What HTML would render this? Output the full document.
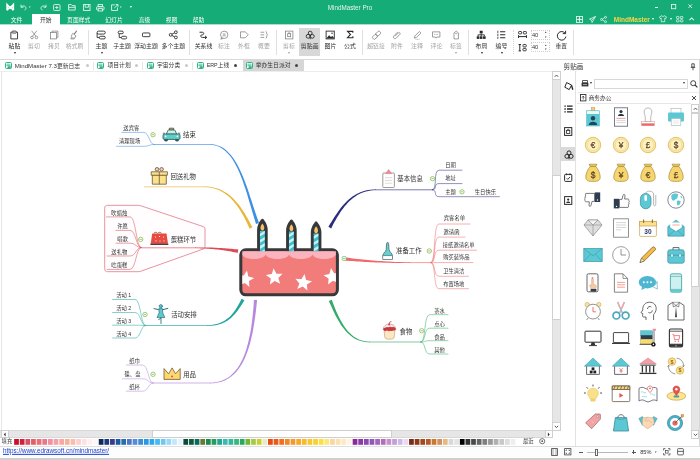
<!DOCTYPE html>
<html lang="zh-CN"><head><meta charset="utf-8"><title>MindMaster Pro</title>
<style>
html,body{margin:0;padding:0;}
body{width:700px;height:460px;overflow:hidden;position:relative;background:#fff;font-family:"Liberation Sans","Noto Sans CJK SC",sans-serif;}
div,svg{position:absolute;box-sizing:border-box;}
svg{overflow:visible;}
.t{white-space:nowrap;line-height:1;}
</style></head><body><div id="app" style="left:0;top:0;width:700px;height:460px;will-change:transform;">
<div style="left:0px;top:0px;width:700px;height:24px;background:#16ac77;"></div>
<div style="left:0px;top:24px;width:700px;height:1px;background:#a9e0cd;"></div>
<div class="t" style="left:350px;top:7.5px;font-size:6.3px;color:rgba(255,255,255,0.88);transform:translate(-50%,-50%);">MindMaster Pro</div>
<svg style="left:6px;top:3.6px;" width="8.4" height="7" viewBox="0 0 8.4 7.4"><path d="M1 6.6V0.8L4.2 4.3L7.4 0.8V6.6" stroke="#fff" fill="none" stroke-width="1.9" stroke-linejoin="miter"/><path d="M1 6.6L4.2 2.9L7.4 6.6" stroke="#fff" fill="none" stroke-width="1.3"/></svg>
<div style="left:0;top:0;opacity:0.85">
<svg style="left:20px;top:3.8px;" width="7" height="6.4" viewBox="0 0 7 6"><path d="M1 0.5V3H3.5" stroke="#fff" fill="none" stroke-width="0.9"/><path d="M1 3C2.5 1 6 1.5 6 4C6 5 5.5 5.5 4.5 5.8" stroke="#fff" fill="none" stroke-width="0.9"/></svg>
<div class="t" style="left:30px;top:7.8px;font-size:3.4px;color:#fff;transform:translate(-50%,-50%);">▾</div>
<svg style="left:39.5px;top:3.8px;" width="7" height="6.4" viewBox="0 0 7 6"><path d="M6 0.5V3H3.5" stroke="#fff" fill="none" stroke-width="0.9"/><path d="M6 3C4.5 1 1 1.5 1 4C1 5 1.5 5.5 2.5 5.8" stroke="#fff" fill="none" stroke-width="0.9"/></svg>
<svg style="left:52.8px;top:3.5px;" width="7.6" height="7" viewBox="0 0 7 6.5"><rect x="0.5" y="0.5" width="6" height="5.5" rx="0.8" stroke="#fff" fill="none" stroke-width="0.85"/><path d="M3.5 1.8V4.7M2 3.25H5" stroke="#fff" fill="none" stroke-width="0.85"/></svg>
<svg style="left:67.6px;top:3.8px;" width="7.8" height="6.6" viewBox="0 0 7 6"><path d="M0.5 5.5V0.5H3L3.8 1.5H6.5V5.5Z" stroke="#fff" fill="none" stroke-width="0.85"/><path d="M0.5 3H6.5" stroke="#fff" fill="none" stroke-width="0.85"/></svg>
<svg style="left:82.6px;top:3.5px;" width="7.6" height="7" viewBox="0 0 7 6.5"><rect x="0.5" y="0.5" width="6" height="5.5" stroke="#fff" fill="none" stroke-width="0.85"/><path d="M2 0.5V3H5V0.5" stroke="#fff" fill="none" stroke-width="0.85"/></svg>
<svg style="left:96px;top:3.5px;" width="8.6" height="7.5" viewBox="0 0 8 7"><rect x="2" y="0.5" width="4" height="2" stroke="#fff" fill="none" stroke-width="0.85"/><rect x="0.5" y="2.5" width="7" height="3" rx="0.8" stroke="#fff" fill="none" stroke-width="0.85"/><rect x="2" y="4.3" width="4" height="2.2" stroke="#fff" stroke-width="0.85" fill="#16ac77"/></svg>
<svg style="left:110.8px;top:3.5px;" width="7.6" height="7" viewBox="0 0 7 6.5"><path d="M3.5 0.8H0.5V6H6V3.2" stroke="#fff" fill="none" stroke-width="0.85"/><path d="M3 3.7L6.5 0.5M4.3 0.5H6.5V2.6" stroke="#fff" fill="none" stroke-width="0.85"/></svg>
<div class="t" style="left:121.3px;top:7.8px;font-size:3.4px;color:#fff;transform:translate(-50%,-50%);">▾</div>
<div class="t" style="left:131px;top:8.3px;font-size:3.4px;color:#fff;transform:translate(-50%,-50%);">▾</div>
<div style="left:129.7px;top:5.5px;width:2.6px;height:0.7px;background:#fff;"></div>
</div>
<div style="left:654.6px;top:6.7px;width:3.6px;height:0.9px;background:rgba(255,255,255,0.9);"></div>
<svg style="left:671.2px;top:4px;" width="5.2" height="5.2" viewBox="0 0 5.2 5.2"><rect x="0.45" y="0.45" width="4.3" height="4.3" stroke="#fff" fill="none" stroke-width="0.85" opacity="0.9"/></svg>
<svg style="left:688.2px;top:4.3px;" width="4.4" height="4.4" viewBox="0 0 4.4 4.4"><path d="M0.4 0.4L4 4M4 0.4L0.4 4" stroke="#fff" fill="none" stroke-width="0.85" opacity="0.9"/></svg>
<div style="left:32px;top:14px;width:28px;height:11px;background:#fff;"></div>
<div class="t" style="left:16.5px;top:20.7px;font-size:5.8px;color:#fff;transform:translate(-50%,-50%);">文件</div>
<div class="t" style="left:45.7px;top:20.7px;font-size:5.8px;color:#333;transform:translate(-50%,-50%);">开始</div>
<div class="t" style="left:78.7px;top:20.7px;font-size:5.8px;color:#fff;transform:translate(-50%,-50%);">页面样式</div>
<div class="t" style="left:114px;top:20.7px;font-size:5.8px;color:#fff;transform:translate(-50%,-50%);">幻灯片</div>
<div class="t" style="left:144.5px;top:20.7px;font-size:5.8px;color:#fff;transform:translate(-50%,-50%);">高级</div>
<div class="t" style="left:171.5px;top:20.7px;font-size:5.8px;color:#fff;transform:translate(-50%,-50%);">视图</div>
<div class="t" style="left:198.5px;top:20.7px;font-size:5.8px;color:#fff;transform:translate(-50%,-50%);">帮助</div>
<div style="left:0;top:0;opacity:0.88">
<svg style="left:575.8px;top:15.6px;" width="7" height="7" viewBox="0 0 8 8"><rect x="0.5" y="0.5" width="7" height="7" stroke="#fff" fill="none" stroke-width="1"/><path d="M4 0.5V7.5M0.5 4H7.5" stroke="#fff" fill="none" stroke-width="1"/><circle cx="4" cy="4" r="1.3" fill="#fff"/></svg>
<svg style="left:588.5px;top:15.6px;" width="7" height="7" viewBox="0 0 8 8"><path d="M7.5 0.5L0.5 3.5L3 4.8L3.5 7.5L7.5 0.5ZM3 4.8L7.5 0.5" stroke="#fff" fill="none" stroke-width="0.9" stroke-linejoin="round"/></svg>
<svg style="left:600px;top:15.6px;" width="7" height="7" viewBox="0 0 8 8"><circle cx="6.3" cy="1.5" r="1.1" stroke="#fff" fill="none" stroke-width="0.9"/><circle cx="1.7" cy="4" r="1.1" stroke="#fff" fill="none" stroke-width="0.9"/><circle cx="6.3" cy="6.5" r="1.1" stroke="#fff" fill="none" stroke-width="0.9"/><path d="M2.7 3.5L5.3 2M2.7 4.5L5.3 6" stroke="#fff" fill="none" stroke-width="0.9"/></svg>
<svg style="left:659px;top:15.4px;" width="8" height="7.2" viewBox="0 0 9 8"><path d="M3 0.8L0.5 2.2L1.5 4L2.5 3.5V7.5H6.5V3.5L7.5 4L8.5 2.2L6 0.8C5.5 1.8 3.5 1.8 3 0.8Z" stroke="#fff" fill="none" stroke-width="0.9" stroke-linejoin="round"/></svg>
<svg style="left:676px;top:15.9px;" width="7.4" height="6.4" viewBox="0 0 8 7"><rect x="0.5" y="0.5" width="2.8" height="2.4" rx="0.8" stroke="#fff" fill="none" stroke-width="0.9"/><rect x="4.7" y="0.5" width="2.8" height="2.4" rx="0.8" stroke="#fff" fill="none" stroke-width="0.9"/><rect x="0.5" y="4.1" width="2.8" height="2.4" rx="0.8" stroke="#fff" fill="none" stroke-width="0.9"/><rect x="4.7" y="4.1" width="2.8" height="2.4" rx="0.8" stroke="#fff" fill="none" stroke-width="0.9"/></svg>
<svg style="left:689px;top:17.3px;" width="5.4" height="3.6" viewBox="0 0 6 4"><path d="M0.5 3.5L3 1L5.5 3.5" stroke="#fff" fill="none" stroke-width="1.2"/></svg>
</div>
<div class="t" style="left:631.8px;top:19.9px;font-size:6.5px;color:#f6d648;transform:translate(-50%,-50%);font-weight:bold;">MindMaster</div>
<div class="t" style="left:652.7px;top:20.2px;font-size:3.6px;color:#fff;transform:translate(-50%,-50%);">▾</div>
<div class="t" style="left:671.3px;top:20.2px;font-size:3.6px;color:#fff;transform:translate(-50%,-50%);">▾</div>
<div style="left:0px;top:25px;width:700px;height:34.5px;background:#fff;border-bottom:1px solid #d9d9d9;"></div>
<svg style="left:9.3px;top:30.400000000000002px;" width="10.4" height="9.65" viewBox="0 0 14 13"><path d="M3.5 3H2.5V12H11.5V3H10.5" stroke="#2a2a2a" fill="none" stroke-width="1.2"/><rect x="4" y="1.5" width="6" height="2.6" rx="1" stroke="#2a2a2a" fill="none" stroke-width="1.2"/></svg>
<div class="t" style="left:14.5px;top:46.9px;font-size:5.9px;color:#2a2a2a;transform:translate(-50%,-50%);">粘贴</div>
<div class="t" style="left:14.5px;top:53.2px;font-size:4.2px;color:#2a2a2a;transform:translate(-50%,-50%);">▾</div>
<svg style="left:28.8px;top:30.400000000000002px;" width="10.4" height="9.65" viewBox="0 0 14 13"><circle cx="4" cy="10" r="1.8" stroke="#7c7c7c" fill="none" stroke-width="1.0"/><circle cx="10" cy="10" r="1.8" stroke="#7c7c7c" fill="none" stroke-width="1.0"/><path d="M4.8 8.3L10.5 1M9.2 8.3L3.5 1" stroke="#7c7c7c" fill="none" stroke-width="1.0"/></svg>
<div class="t" style="left:34px;top:46.9px;font-size:5.9px;color:#a4a4a4;transform:translate(-50%,-50%);">剪切</div>
<svg style="left:48.8px;top:30.400000000000002px;" width="10.4" height="9.65" viewBox="0 0 14 13"><path d="M4 3V1.5H12V10H10.5" stroke="#7c7c7c" fill="none" stroke-width="1.0"/><rect x="2" y="3.5" width="8" height="8.5" stroke="#7c7c7c" fill="none" stroke-width="1.0"/></svg>
<div class="t" style="left:54px;top:46.9px;font-size:5.9px;color:#a4a4a4;transform:translate(-50%,-50%);">拷贝</div>
<svg style="left:69.3px;top:30.400000000000002px;" width="10.4" height="9.65" viewBox="0 0 14 13"><path d="M10.5 1L7 5.5" stroke="#7c7c7c" fill="none" stroke-width="1.6"/><path d="M5 4.5L9.5 8L7 12H2.5C3.5 10 3 7 5 4.5Z" stroke="#7c7c7c" fill="none" stroke-width="1.0"/><path d="M4 12L5 9.5M6 12L7 9.5" stroke="#7c7c7c" fill="none" stroke-width="0.7"/></svg>
<div class="t" style="left:74.5px;top:46.9px;font-size:5.9px;color:#a4a4a4;transform:translate(-50%,-50%);">格式刷</div>
<div style="left:88.0px;top:30px;width:1px;height:25px;background:#e0e0e0;"></div>
<svg style="left:96.3px;top:30.400000000000002px;" width="10.4" height="9.65" viewBox="0 0 14 13"><rect x="1.5" y="1.5" width="11" height="4" rx="2" stroke="#2a2a2a" fill="none" stroke-width="1.2"/><rect x="4.5" y="8.5" width="8" height="3.5" rx="1.7" stroke="#2a2a2a" fill="none" stroke-width="1.2"/><path d="M1.5 4V10.2H4.5" stroke="#2a2a2a" fill="none" stroke-width="1.2"/></svg>
<div class="t" style="left:101.5px;top:46.9px;font-size:5.9px;color:#2a2a2a;transform:translate(-50%,-50%);">主题</div>
<div class="t" style="left:101.5px;top:53.2px;font-size:4.2px;color:#2a2a2a;transform:translate(-50%,-50%);">▾</div>
<svg style="left:116.8px;top:30.400000000000002px;" width="10.4" height="9.65" viewBox="0 0 14 13"><rect x="1.5" y="1.5" width="7" height="3.5" rx="1.7" stroke="#2a2a2a" fill="none" stroke-width="1.2"/><rect x="6" y="8.5" width="7" height="3.5" rx="1.7" stroke="#2a2a2a" fill="none" stroke-width="1.2"/><path d="M3 5V10.2H6" stroke="#2a2a2a" fill="none" stroke-width="1.2"/></svg>
<div class="t" style="left:122px;top:46.9px;font-size:5.9px;color:#2a2a2a;transform:translate(-50%,-50%);">子主题</div>
<svg style="left:140.8px;top:30.400000000000002px;" width="10.4" height="9.65" viewBox="0 0 14 13"><rect x="2" y="4" width="10" height="5" rx="1" stroke="#2a2a2a" fill="none" stroke-width="1.2"/></svg>
<div class="t" style="left:146px;top:46.9px;font-size:5.9px;color:#2a2a2a;transform:translate(-50%,-50%);">浮动主题</div>
<svg style="left:168.10000000000002px;top:30.400000000000002px;" width="10.4" height="9.65" viewBox="0 0 14 13"><circle cx="3.6" cy="6.5" r="1.9" stroke="#2a2a2a" fill="none" stroke-width="1.2"/><circle cx="10.6" cy="3" r="1.9" stroke="#2a2a2a" fill="none" stroke-width="1.2"/><circle cx="10.6" cy="10" r="1.9" stroke="#2a2a2a" fill="none" stroke-width="1.2"/><path d="M5.3 5.6L8.9 3.8M5.3 7.4L8.9 9.2" stroke="#2a2a2a" fill="none" stroke-width="1.2"/></svg>
<div class="t" style="left:173.3px;top:46.9px;font-size:5.9px;color:#2a2a2a;transform:translate(-50%,-50%);">多个主题</div>
<div style="left:189.0px;top:30px;width:1px;height:25px;background:#e0e0e0;"></div>
<svg style="left:198.3px;top:30.400000000000002px;" width="10.4" height="9.65" viewBox="0 0 14 13"><path d="M2 3H5.5C8.5 3 8.5 6.5 5.5 6.5C3 6.5 3 10 6 10H11.5" stroke="#2a2a2a" fill="none" stroke-width="1.3"/><path d="M9.5 8L11.8 10L9.5 12" stroke="#2a2a2a" fill="none" stroke-width="1.3"/></svg>
<div class="t" style="left:203.5px;top:46.9px;font-size:5.9px;color:#2a2a2a;transform:translate(-50%,-50%);">关系线</div>
<svg style="left:218.8px;top:30.400000000000002px;" width="10.4" height="9.65" viewBox="0 0 14 13"><circle cx="7" cy="6.5" r="5" stroke="#7c7c7c" fill="none" stroke-width="1.0"/><path d="M3.5 10L2.5 12.5L5.5 11.2" stroke="#7c7c7c" fill="none" stroke-width="1.0"/><path d="M5 5.5H9M5 7.8H9" stroke="#7c7c7c" fill="none" stroke-width="1.0"/></svg>
<div class="t" style="left:224px;top:46.9px;font-size:5.9px;color:#a4a4a4;transform:translate(-50%,-50%);">标注</div>
<svg style="left:238.8px;top:30.400000000000002px;" width="10.4" height="9.65" viewBox="0 0 14 13"><path d="M2 2.5H8.5L12.5 6.5L8.5 10.5H2Z" stroke="#7c7c7c" fill="none" stroke-width="1.0" stroke-linejoin="round"/></svg>
<div class="t" style="left:244px;top:46.9px;font-size:5.9px;color:#a4a4a4;transform:translate(-50%,-50%);">外框</div>
<svg style="left:258.8px;top:30.400000000000002px;" width="10.4" height="9.65" viewBox="0 0 14 13"><path d="M2 3H7M2 6.5H7M2 10H7" stroke="#7c7c7c" fill="none" stroke-width="1.0"/><path d="M9 1.5C10.5 1.5 10 6 11.5 6.5C10 7 10.5 11.5 9 11.5" stroke="#7c7c7c" fill="none" stroke-width="1.0"/></svg>
<div class="t" style="left:264px;top:46.9px;font-size:5.9px;color:#a4a4a4;transform:translate(-50%,-50%);">概要</div>
<div style="left:276.0px;top:30px;width:1px;height:25px;background:#e0e0e0;"></div>
<svg style="left:283.8px;top:30.400000000000002px;" width="10.4" height="9.65" viewBox="0 0 14 13"><rect x="2" y="1.5" width="10" height="10.5" stroke="#7c7c7c" fill="none" stroke-width="1.0"/><rect x="5" y="5" width="4" height="4" stroke="#7c7c7c" fill="none" stroke-width="1.0"/><path d="M5 5L7 3.5L9 5" stroke="#7c7c7c" fill="none" stroke-width="1.0"/></svg>
<div class="t" style="left:289px;top:46.9px;font-size:5.9px;color:#a4a4a4;transform:translate(-50%,-50%);">剪标</div>
<div class="t" style="left:289px;top:53.2px;font-size:4.2px;color:#a4a4a4;transform:translate(-50%,-50%);">▾</div>
<div style="left:299px;top:27.5px;width:21px;height:28px;background:#d8d8d8;"></div>
<svg style="left:304.5px;top:30.400000000000002px;" width="10.4" height="9.65" viewBox="0 0 14 13"><circle cx="7" cy="4.2" r="2.6" stroke="#2a2a2a" fill="none" stroke-width="1.2"/><circle cx="4.2" cy="8.5" r="2.6" stroke="#2a2a2a" fill="none" stroke-width="1.2"/><circle cx="9.8" cy="8.5" r="2.6" stroke="#2a2a2a" fill="none" stroke-width="1.2"/><path d="M7 8.5V12.4" stroke="#2a2a2a" fill="none" stroke-width="1.2"/></svg>
<div class="t" style="left:309.7px;top:46.9px;font-size:5.9px;color:#2a2a2a;transform:translate(-50%,-50%);">剪贴画</div>
<svg style="left:325.3px;top:30.400000000000002px;" width="10.4" height="9.65" viewBox="0 0 14 13"><rect x="1.5" y="1.5" width="11" height="10.5" stroke="#2a2a2a" fill="none" stroke-width="1.2"/><path d="M2 11L5.5 7L8 9.5L10 8L12 10.5V11.5H2Z" fill="#2a2a2a" stroke="none"/><circle cx="9.5" cy="4.5" r="1" fill="#2a2a2a"/></svg>
<div class="t" style="left:330.5px;top:46.9px;font-size:5.9px;color:#2a2a2a;transform:translate(-50%,-50%);">图片</div>
<svg style="left:344.8px;top:30.400000000000002px;" width="10.4" height="9.65" viewBox="0 0 14 13"><path d="M10.6 3.8V1.8H3.4L7.4 6L3.4 10.4H10.6V8.4" stroke="#2a2a2a" fill="none" stroke-width="1.5"/></svg>
<div class="t" style="left:350px;top:46.9px;font-size:5.9px;color:#2a2a2a;transform:translate(-50%,-50%);">公式</div>
<div style="left:361.5px;top:30px;width:1px;height:25px;background:#e0e0e0;"></div>
<svg style="left:370.8px;top:30.400000000000002px;" width="10.4" height="9.65" viewBox="0 0 14 13"><rect x="5.5" y="0" width="4.5" height="7" rx="1.5" transform="rotate(45 7 6.5)" stroke="#7c7c7c" fill="none" stroke-width="1.0"/><rect x="5.5" y="6" width="4.5" height="7" rx="1.5" transform="rotate(45 7 6.5)" stroke="#7c7c7c" fill="none" stroke-width="1.0"/></svg>
<div class="t" style="left:376px;top:46.9px;font-size:5.9px;color:#a4a4a4;transform:translate(-50%,-50%);">超链接</div>
<svg style="left:391.8px;top:30.400000000000002px;" width="10.4" height="9.65" viewBox="0 0 14 13"><path d="M4 8.5L8.5 4C10 2.5 12 4.5 10.5 6L5.5 11C3.5 13 0.5 10 2.5 8L8 2.5" stroke="#7c7c7c" fill="none" stroke-width="1.0"/></svg>
<div class="t" style="left:397px;top:46.9px;font-size:5.9px;color:#a4a4a4;transform:translate(-50%,-50%);">附件</div>
<svg style="left:411.8px;top:30.400000000000002px;" width="10.4" height="9.65" viewBox="0 0 14 13"><path d="M3 11L4 8L10 2L12 4L6 10Z" stroke="#7c7c7c" fill="none" stroke-width="1.0"/><path d="M5 12.5H11" stroke="#7c7c7c" fill="none" stroke-width="1.0" stroke-dasharray="1 1"/></svg>
<div class="t" style="left:417px;top:46.9px;font-size:5.9px;color:#a4a4a4;transform:translate(-50%,-50%);">注释</div>
<svg style="left:431.3px;top:30.400000000000002px;" width="10.4" height="9.65" viewBox="0 0 14 13"><path d="M2 2.5H12V9.5H8L7 11L6 9.5H2Z" stroke="#7c7c7c" fill="none" stroke-width="1.0" stroke-linejoin="round"/><path d="M4.5 6H5.5M6.5 6H7.5M8.5 6H9.5" stroke="#7c7c7c" fill="none" stroke-width="1.0"/></svg>
<div class="t" style="left:436.5px;top:46.9px;font-size:5.9px;color:#a4a4a4;transform:translate(-50%,-50%);">评论</div>
<svg style="left:450.8px;top:30.400000000000002px;" width="10.4" height="9.65" viewBox="0 0 14 13"><path d="M4 12V4L7 1.5L10 4V12Z" stroke="#7c7c7c" fill="none" stroke-width="1.0" stroke-linejoin="round"/><circle cx="7" cy="4.8" r="0.8" stroke="#7c7c7c" fill="none" stroke-width="0.7"/></svg>
<div class="t" style="left:456px;top:46.9px;font-size:5.9px;color:#a4a4a4;transform:translate(-50%,-50%);">标签</div>
<div class="t" style="left:456px;top:53.2px;font-size:4.2px;color:#a4a4a4;transform:translate(-50%,-50%);">▾</div>
<div style="left:468.0px;top:30px;width:1px;height:25px;background:#e0e0e0;"></div>
<svg style="left:476.3px;top:30.400000000000002px;" width="10.4" height="9.65" viewBox="0 0 14 13"><rect x="5" y="1" width="4" height="3.5" fill="#2a2a2a"/><rect x="1" y="8.5" width="3.5" height="3.5" fill="#2a2a2a"/><rect x="5.2" y="8.5" width="3.5" height="3.5" fill="#2a2a2a"/><rect x="9.5" y="8.5" width="3.5" height="3.5" fill="#2a2a2a"/><path d="M7 4.5V8.5M2.7 8.5V6.5H11.2V8.5" stroke="#2a2a2a" fill="none" stroke-width="1.2"/></svg>
<div class="t" style="left:481.5px;top:46.9px;font-size:5.9px;color:#2a2a2a;transform:translate(-50%,-50%);">布局</div>
<div class="t" style="left:481.5px;top:53.2px;font-size:4.2px;color:#2a2a2a;transform:translate(-50%,-50%);">▾</div>
<svg style="left:496.3px;top:30.400000000000002px;" width="10.4" height="9.65" viewBox="0 0 14 13"><path d="M5.5 2.5H12.5M5.5 6.5H12.5M5.5 10.5H12.5" stroke="#2a2a2a" fill="none" stroke-width="1.4"/><path d="M2.5 1V4M2.5 5V8M2.5 9V12" stroke="#2a2a2a" fill="none" stroke-width="1.1"/></svg>
<div class="t" style="left:501.5px;top:46.9px;font-size:5.9px;color:#2a2a2a;transform:translate(-50%,-50%);">编号</div>
<div class="t" style="left:501.5px;top:53.2px;font-size:4.2px;color:#2a2a2a;transform:translate(-50%,-50%);">▾</div>
<div style="left:512.8px;top:29.5px;width:1px;height:24px;border-left:1px dotted #d6d6d6;"></div>
<svg style="left:517.6px;top:31px;" width="9" height="7.4" viewBox="0 0 9 7.4"><rect x="0.6" y="0.5" width="3" height="2.4" rx="0.6" stroke="#2a2a2a" fill="none" stroke-width="0.9"/><rect x="5.4" y="0.5" width="3" height="2.4" rx="0.6" stroke="#2a2a2a" fill="none" stroke-width="0.9"/><path d="M0.5 5.6H8.5M0.5 4.2V7M8.5 4.2V7" stroke="#2a2a2a" fill="none" stroke-width="1"/></svg>
<svg style="left:517.6px;top:43.6px;" width="9" height="7.4" viewBox="0 0 9 7.4"><path d="M0.6 0.5H3M0.6 6.9H3M1.8 0.5V6.9" stroke="#2a2a2a" fill="none" stroke-width="1"/><rect x="5" y="0.5" width="3.2" height="2.4" rx="0.6" stroke="#2a2a2a" fill="none" stroke-width="0.9"/><rect x="5" y="4.4" width="3.2" height="2.4" rx="0.6" stroke="#2a2a2a" fill="none" stroke-width="0.9"/></svg>
<div style="left:530.7px;top:29.5px;width:19px;height:10.3px;border:1px dotted #cdcdcd;background:#fff;"></div>
<div class="t" style="left:532px;top:35.7px;font-size:5.6px;color:#333;transform:translate(0,-50%);">40</div>
<div class="t" style="left:545.8px;top:33.4px;font-size:3.4px;color:#333;transform:translate(-50%,-50%);">▴</div>
<div class="t" style="left:545.8px;top:37.6px;font-size:3.4px;color:#333;transform:translate(-50%,-50%);">▾</div>
<div style="left:530.7px;top:42px;width:19px;height:10.3px;border:1px dotted #cdcdcd;background:#fff;"></div>
<div class="t" style="left:532px;top:48.2px;font-size:5.6px;color:#333;transform:translate(0,-50%);">40</div>
<div class="t" style="left:545.8px;top:45.9px;font-size:3.4px;color:#333;transform:translate(-50%,-50%);">▴</div>
<div class="t" style="left:545.8px;top:50.1px;font-size:3.4px;color:#333;transform:translate(-50%,-50%);">▾</div>
<svg style="left:555.8px;top:29.5px;" width="11" height="11" viewBox="0 0 11 11"><path d="M9.2 3.4A4.3 4.3 0 1 0 9.9 6.6" stroke="#2a2a2a" fill="none" stroke-width="1"/><path d="M6.8 3.6H9.6V0.8" stroke="#2a2a2a" fill="none" stroke-width="1"/></svg>
<div class="t" style="left:561.3px;top:46.9px;font-size:5.7px;color:#2a2a2a;transform:translate(-50%,-50%);">重置</div>
<div style="left:573.1px;top:30px;width:1px;height:25px;background:#e0e0e0;"></div>
<div style="left:0px;top:60px;width:552px;height:12px;background:#fff;border-bottom:1px solid #ececec;"></div>
<div style="left:242.5px;top:60px;width:61.5px;height:11px;background:#d6d6d6;"></div>
<svg style="left:4.800000000000001px;top:61.7px;" width="7" height="7" viewBox="0 0 7 7"><rect x="0.5" y="0.5" width="6" height="6" rx="1" stroke="#1aab75" fill="#fff" stroke-width="0.9"/><path d="M1.5 2.2H5.5M1.5 3.6H5.5" stroke="#1aab75" stroke-width="0.7"/><rect x="2.6" y="4.3" width="3.2" height="1.6" fill="#1aab75"/></svg>
<div class="t" style="left:14.8px;top:66.4px;font-size:5.8px;color:#333;transform:translate(0,-50%);"><span style="font-size:6.12px">MindMaster 7.3</span>更新日志</div>
<div style="left:85.8px;top:63.8px;width:3.4px;height:3.4px;border-radius:50%;background:#c8c8c8;"></div>
<div style="left:92.7px;top:61.5px;width:1px;height:8px;background:#e4e4e4;"></div>
<svg style="left:97.2px;top:61.7px;" width="7" height="7" viewBox="0 0 7 7"><rect x="0.5" y="0.5" width="6" height="6" rx="1" stroke="#1aab75" fill="#fff" stroke-width="0.9"/><path d="M1.5 2.2H5.5M1.5 3.6H5.5" stroke="#1aab75" stroke-width="0.7"/><rect x="2.6" y="4.3" width="3.2" height="1.6" fill="#1aab75"/></svg>
<div class="t" style="left:107.5px;top:66.4px;font-size:5.8px;color:#333;transform:translate(0,-50%);">项目计划</div>
<div style="left:135.0px;top:63.8px;width:3.4px;height:3.4px;border-radius:50%;background:#c8c8c8;"></div>
<div style="left:142.2px;top:61.5px;width:1px;height:8px;background:#e4e4e4;"></div>
<svg style="left:147.2px;top:61.7px;" width="7" height="7" viewBox="0 0 7 7"><rect x="0.5" y="0.5" width="6" height="6" rx="1" stroke="#1aab75" fill="#fff" stroke-width="0.9"/><path d="M1.5 2.2H5.5M1.5 3.6H5.5" stroke="#1aab75" stroke-width="0.7"/><rect x="2.6" y="4.3" width="3.2" height="1.6" fill="#1aab75"/></svg>
<div class="t" style="left:157px;top:66.4px;font-size:5.8px;color:#333;transform:translate(0,-50%);">宇宙分类</div>
<div style="left:185.0px;top:63.8px;width:3.4px;height:3.4px;border-radius:50%;background:#c8c8c8;"></div>
<div style="left:192.2px;top:61.5px;width:1px;height:8px;background:#e4e4e4;"></div>
<svg style="left:196.5px;top:61.7px;" width="7" height="7" viewBox="0 0 7 7"><rect x="0.5" y="0.5" width="6" height="6" rx="1" stroke="#1aab75" fill="#fff" stroke-width="0.9"/><path d="M1.5 2.2H5.5M1.5 3.6H5.5" stroke="#1aab75" stroke-width="0.7"/><rect x="2.6" y="4.3" width="3.2" height="1.6" fill="#1aab75"/></svg>
<div class="t" style="left:206.7px;top:66.4px;font-size:5.8px;color:#333;transform:translate(0,-50%);"><span style="font-size:5.3px">ERP</span>上线</div>
<div style="left:234.0px;top:63.8px;width:3.4px;height:3.4px;border-radius:50%;background:#444;"></div>
<svg style="left:245.7px;top:61.7px;" width="7" height="7" viewBox="0 0 7 7"><rect x="0.5" y="0.5" width="6" height="6" rx="1" stroke="#1aab75" fill="#fff" stroke-width="0.9"/><path d="M1.5 2.2H5.5M1.5 3.6H5.5" stroke="#1aab75" stroke-width="0.7"/><rect x="2.6" y="4.3" width="3.2" height="1.6" fill="#1aab75"/></svg>
<div class="t" style="left:255.7px;top:66.4px;font-size:5.8px;color:#333;transform:translate(0,-50%);">举办生日派对</div>
<div style="left:295.0px;top:63.8px;width:3.4px;height:3.4px;border-radius:50%;background:#444;"></div>
<div style="left:1px;top:72px;width:1px;height:358px;background:#e6e6e6;"></div>
<svg style="left:0;top:0" width="700" height="460" viewBox="0 0 700 460"><path d="M259.0 223.0L257.5 218.8L256.0 214.5L254.6 210.2L253.1 205.8L251.7 201.3L250.2 196.9L248.8 192.5L247.3 188.1L245.8 183.9L244.2 179.7L242.5 175.6L240.8 171.7L239.0 167.9L237.1 164.3L235.1 161.0L233.0 157.8L230.8 155.0L228.4 152.4L225.9 150.1L223.3 148.1L220.5 146.6L217.5 145.4L214.3 144.5L211.0 144.2L211.0 144.8L214.2 145.3L217.2 146.1L220.1 147.3L222.8 148.9L225.3 150.9L227.6 153.2L229.9 155.7L232.0 158.6L234.0 161.7L235.8 165.0L237.6 168.6L239.3 172.3L240.9 176.2L242.5 180.3L243.9 184.5L245.4 188.8L246.8 193.1L248.1 197.6L249.4 202.0L250.8 206.5L252.1 210.9L253.4 215.4L254.7 219.7L256.0 224.0Z" fill="#3c8fe3"/><path d="M211.5 144.5H154" stroke="#3c8fe3" fill="none" stroke-width="0.6400000000000001" stroke-linecap="round"/><path d="M121.7 132.4H143.5C149.5 132.4 149 144.5 154 144.5" stroke="#3c8fe3" fill="none" stroke-width="0.52" stroke-linecap="round"/><path d="M116.5 146.3H143.5C149.5 146.3 149 144.5 154 144.5" stroke="#3c8fe3" fill="none" stroke-width="0.52" stroke-linecap="round"/><circle cx="153" cy="134.7" r="2.2" fill="#fff" stroke="#83b84a" stroke-width="0.75"/><path d="M151.8 134.7H154.2" stroke="#83b84a" stroke-width="0.75"/><path d="M252.4 227.3L250.9 224.5L249.4 221.7L248.0 219.0L246.4 216.4L244.9 213.8L243.3 211.3L241.7 208.9L240.1 206.6L238.4 204.3L236.6 202.2L234.8 200.2L233.0 198.3L231.0 196.5L229.0 194.8L226.9 193.3L224.7 191.9L222.5 190.7L220.1 189.6L217.7 188.6L215.2 187.9L212.5 187.3L209.8 186.8L207.0 186.6L204.0 186.5L204.0 187.1L206.9 187.3L209.7 187.6L212.4 188.1L214.9 188.8L217.4 189.6L219.7 190.6L221.9 191.7L224.1 193.0L226.1 194.4L228.1 196.0L230.0 197.6L231.8 199.4L233.5 201.3L235.2 203.4L236.9 205.5L238.4 207.7L240.0 210.1L241.4 212.5L242.9 215.0L244.3 217.6L245.7 220.2L247.0 223.0L248.3 225.8L249.6 228.7Z" fill="#e9b53a"/><path d="M204.5 186.8H144.3" stroke="#e9b53a" fill="none" stroke-width="0.6400000000000001" stroke-linecap="round"/><path d="M107.7 205.3H138C139.5 205.3 140 205.5 141.5 206L203 226.5C204.5 227 205 227.6 205 229V246.6C205 248 204.5 248.6 203 249.1L141.5 271C140 271.5 139.5 271.7 138 271.7H107.7C105.7 271.7 104.7 270.7 104.7 268.7V208.3C104.7 206.3 105.7 205.3 107.7 205.3Z" fill="#fffdfd" stroke="#e27785" stroke-width="0.8"/><path d="M238.3 249.4L236.6 249.3L235.0 249.2L233.3 249.0L231.7 248.8L230.0 248.7L228.3 248.5L226.7 248.4L225.0 248.3L223.3 248.2L221.6 248.0L219.8 248.0L218.1 247.9L216.3 247.8L214.5 247.7L212.7 247.6L210.9 247.6L209.0 247.5L207.1 247.5L205.2 247.5L203.2 247.5L201.2 247.5L199.2 247.5L197.1 247.5L195.0 247.5L195.0 248.1L197.1 248.2L199.2 248.3L201.2 248.4L203.2 248.5L205.1 248.6L207.0 248.7L208.9 248.8L210.8 249.0L212.6 249.1L214.4 249.3L216.2 249.5L217.9 249.6L219.7 249.8L221.4 250.0L223.1 250.3L224.7 250.5L226.4 250.7L228.0 251.0L229.7 251.3L231.3 251.6L232.9 251.9L234.5 252.2L236.1 252.6L237.7 253.0Z" fill="#dc4a58"/><path d="M195.5 247.8H141" stroke="#dc4a58" fill="none" stroke-width="0.6400000000000001" stroke-linecap="round"/><path d="M106.4 216.9H130C136 216.9 136 247.5 141 247.5" stroke="#dc4a58" fill="none" stroke-width="0.52" stroke-linecap="round"/><path d="M116 230.4H130C136 230.4 136 247.5 141 247.5" stroke="#dc4a58" fill="none" stroke-width="0.52" stroke-linecap="round"/><path d="M116 243.2H130C136 243.2 136 247.5 141 247.5" stroke="#dc4a58" fill="none" stroke-width="0.52" stroke-linecap="round"/><path d="M107 256H130C136 256 136 247.5 141 247.5" stroke="#dc4a58" fill="none" stroke-width="0.52" stroke-linecap="round"/><path d="M107 269.4H130C136 269.4 136 247.5 141 247.5" stroke="#dc4a58" fill="none" stroke-width="0.52" stroke-linecap="round"/><circle cx="140.7" cy="239.4" r="2.2" fill="#fff" stroke="#83b84a" stroke-width="0.75"/><path d="M139.5 239.4H141.89999999999998" stroke="#83b84a" stroke-width="0.75"/><path d="M241.6 298.7L240.6 300.8L239.6 302.8L238.5 304.7L237.5 306.5L236.4 308.2L235.3 309.9L234.2 311.4L233.1 312.9L232.0 314.3L230.8 315.7L229.5 316.9L228.2 318.1L226.9 319.1L225.5 320.1L224.0 321.0L222.5 321.8L220.9 322.6L219.2 323.2L217.4 323.8L215.5 324.3L213.6 324.6L211.5 324.9L209.3 325.1L207.0 325.2L207.0 325.8L209.3 325.8L211.6 325.7L213.7 325.5L215.7 325.2L217.7 324.8L219.5 324.3L221.3 323.7L223.0 323.0L224.7 322.2L226.3 321.3L227.8 320.4L229.3 319.3L230.7 318.2L232.0 316.9L233.4 315.6L234.7 314.2L235.9 312.7L237.2 311.2L238.4 309.5L239.6 307.8L240.8 306.0L242.0 304.2L243.2 302.2L244.4 300.3Z" fill="#1ea69b"/><path d="M207.5 325.5H145.5" stroke="#1ea69b" fill="none" stroke-width="0.6400000000000001" stroke-linecap="round"/><path d="M112.5 299.5H135C141 299.5 140.5 325.5 145.5 325.5" stroke="#1ea69b" fill="none" stroke-width="0.52" stroke-linecap="round"/><path d="M112.5 312.5H135C141 312.5 140.5 325.5 145.5 325.5" stroke="#1ea69b" fill="none" stroke-width="0.52" stroke-linecap="round"/><path d="M112.5 325.2H135C141 325.2 140.5 325.5 145.5 325.5" stroke="#1ea69b" fill="none" stroke-width="0.52" stroke-linecap="round"/><path d="M112.5 338H135C141 338 140.5 325.5 145.5 325.5" stroke="#1ea69b" fill="none" stroke-width="0.52" stroke-linecap="round"/><circle cx="145" cy="314.5" r="2.2" fill="#fff" stroke="#83b84a" stroke-width="0.75"/><path d="M143.8 314.5H146.2" stroke="#83b84a" stroke-width="0.75"/><path d="M253.9 299.9L253.6 305.5L253.1 310.9L252.6 316.3L252.0 321.6L251.3 326.7L250.5 331.7L249.5 336.6L248.5 341.3L247.3 345.8L246.1 350.1L244.6 354.2L243.1 358.0L241.3 361.7L239.5 365.1L237.4 368.2L235.2 371.1L232.8 373.6L230.2 375.9L227.4 377.9L224.4 379.5L221.1 380.9L217.7 381.8L214.0 382.4L210.0 382.7L210.0 383.3L214.0 383.2L217.8 382.6L221.4 381.7L224.8 380.4L227.9 378.8L230.9 376.8L233.6 374.5L236.2 371.9L238.5 369.0L240.7 365.8L242.7 362.4L244.6 358.7L246.2 354.8L247.8 350.6L249.2 346.3L250.5 341.8L251.6 337.0L252.7 332.2L253.6 327.1L254.4 321.9L255.2 316.6L255.9 311.2L256.5 305.7L257.1 300.1Z" fill="#b589e0"/><path d="M210.5 383H153" stroke="#b589e0" fill="none" stroke-width="0.6400000000000001" stroke-linecap="round"/><path d="M126.2 365H142.5C148.5 365 148 383 153 383" stroke="#b589e0" fill="none" stroke-width="0.52" stroke-linecap="round"/><path d="M122 378.8H142.5C148.5 378.8 148 383 153 383" stroke="#b589e0" fill="none" stroke-width="0.52" stroke-linecap="round"/><path d="M126.2 391.2H142.5C148.5 391.2 148 383 153 383" stroke="#b589e0" fill="none" stroke-width="0.52" stroke-linecap="round"/><circle cx="153" cy="374.3" r="2.2" fill="#fff" stroke="#83b84a" stroke-width="0.75"/><path d="M151.8 374.3H154.2" stroke="#83b84a" stroke-width="0.75"/><path d="M331.2 228.4L332.6 225.5L334.0 222.8L335.5 220.2L337.0 217.6L338.5 215.2L340.0 212.8L341.5 210.5L343.1 208.4L344.7 206.3L346.4 204.4L348.0 202.5L349.8 200.8L351.6 199.2L353.4 197.7L355.3 196.4L357.3 195.1L359.3 194.0L361.4 193.0L363.6 192.2L365.9 191.5L368.3 190.9L370.8 190.5L373.3 190.2L376.0 190.1L376.0 189.5L373.3 189.5L370.7 189.7L368.1 190.1L365.7 190.6L363.3 191.2L361.0 192.0L358.8 192.9L356.6 194.0L354.6 195.2L352.5 196.6L350.6 198.0L348.7 199.6L346.8 201.3L345.0 203.2L343.2 205.1L341.5 207.1L339.8 209.3L338.2 211.5L336.5 213.9L334.9 216.3L333.3 218.8L331.7 221.4L330.0 224.1L328.4 226.8Z" fill="#2b2d7e"/><path d="M375.5 189.8H432.6" stroke="#2b2d7e" fill="none" stroke-width="0.6400000000000001" stroke-linecap="round"/><path d="M432.6 189.8C437.6 189.8 433 170.2 439 170.2H462" stroke="#2b2d7e" fill="none" stroke-width="0.52" stroke-linecap="round"/><path d="M432.6 189.8C437.6 189.8 433 183.6 439 183.6H462" stroke="#2b2d7e" fill="none" stroke-width="0.52" stroke-linecap="round"/><path d="M432.6 189.8C437.6 189.8 433 196.7 439 196.7H499.4" stroke="#2b2d7e" fill="none" stroke-width="0.52" stroke-linecap="round"/><circle cx="432.6" cy="178.7" r="2.2" fill="#fff" stroke="#83b84a" stroke-width="0.75"/><path d="M431.40000000000003 178.7H433.8" stroke="#83b84a" stroke-width="0.75"/><circle cx="462" cy="191.8" r="2.2" fill="#fff" stroke="#83b84a" stroke-width="0.75"/><path d="M460.8 191.8H463.2" stroke="#83b84a" stroke-width="0.75"/><path d="M344.8 260.7L347.3 260.8L349.9 260.9L352.4 261.1L354.9 261.3L357.4 261.4L360.0 261.6L362.5 261.7L365.1 261.9L367.7 262.0L370.3 262.2L372.9 262.3L375.6 262.4L378.2 262.5L381.0 262.6L383.7 262.7L386.5 262.8L389.3 262.8L392.1 262.9L395.0 262.9L397.9 263.0L400.8 263.0L403.8 263.0L406.9 263.0L410.0 262.9L410.0 262.3L406.9 262.2L403.9 262.2L400.9 262.1L397.9 262.0L395.0 261.9L392.1 261.7L389.3 261.6L386.5 261.4L383.8 261.3L381.0 261.1L378.3 260.9L375.7 260.7L373.0 260.5L370.4 260.3L367.8 260.0L365.3 259.8L362.7 259.5L360.2 259.2L357.7 259.0L355.1 258.7L352.6 258.4L350.1 258.0L347.7 257.7L345.2 257.3Z" fill="#f0686a"/><path d="M409.5 262.6H431" stroke="#f0686a" fill="none" stroke-width="0.6400000000000001" stroke-linecap="round"/><path d="M431 262.6C436 262.6 433 224 439 224H470" stroke="#f0686a" fill="none" stroke-width="0.52" stroke-linecap="round"/><path d="M431 262.6C436 262.6 433 237.1 439 237.1H465" stroke="#f0686a" fill="none" stroke-width="0.52" stroke-linecap="round"/><path d="M431 262.6C436 262.6 433 250.2 439 250.2H476.6" stroke="#f0686a" fill="none" stroke-width="0.52" stroke-linecap="round"/><path d="M431 262.6C436 262.6 433 262.6 439 262.6H473" stroke="#f0686a" fill="none" stroke-width="0.52" stroke-linecap="round"/><path d="M431 262.6C436 262.6 433 276.3 439 276.3H468.5" stroke="#f0686a" fill="none" stroke-width="0.52" stroke-linecap="round"/><path d="M431 262.6C436 262.6 433 288.7 439 288.7H468.5" stroke="#f0686a" fill="none" stroke-width="0.52" stroke-linecap="round"/><circle cx="429.3" cy="251" r="2.2" fill="#fff" stroke="#83b84a" stroke-width="0.75"/><path d="M428.1 251H430.5" stroke="#83b84a" stroke-width="0.75"/><path d="M328.8 300.9L330.2 303.9L331.5 306.8L332.8 309.7L334.1 312.5L335.4 315.2L336.8 317.7L338.2 320.2L339.6 322.6L341.0 324.9L342.5 327.0L344.1 329.0L345.7 330.9L347.3 332.7L349.0 334.3L350.8 335.8L352.6 337.2L354.5 338.4L356.5 339.5L358.5 340.3L360.6 341.1L362.9 341.6L365.1 342.0L367.5 342.3L370.0 342.3L370.0 341.7L367.6 341.6L365.3 341.3L363.0 340.8L360.9 340.2L358.9 339.4L357.0 338.5L355.1 337.4L353.3 336.2L351.6 334.8L350.0 333.3L348.4 331.7L346.9 329.9L345.4 328.0L344.0 326.0L342.7 323.8L341.3 321.6L340.0 319.2L338.8 316.7L337.5 314.1L336.3 311.4L335.2 308.7L334.0 305.8L332.9 302.8L331.8 299.7Z" fill="#35ab6a"/><path d="M369.5 342H421" stroke="#35ab6a" fill="none" stroke-width="0.6400000000000001" stroke-linecap="round"/><path d="M421 342C426 342 423.7 314.7 429.7 314.7H448" stroke="#35ab6a" fill="none" stroke-width="0.52" stroke-linecap="round"/><path d="M421 342C426 342 423.7 328.2 429.7 328.2H448" stroke="#35ab6a" fill="none" stroke-width="0.52" stroke-linecap="round"/><path d="M421 342C426 342 423.7 340.7 429.7 340.7H448" stroke="#35ab6a" fill="none" stroke-width="0.52" stroke-linecap="round"/><path d="M421 342C426 342 423.7 354 429.7 354H448" stroke="#35ab6a" fill="none" stroke-width="0.52" stroke-linecap="round"/><circle cx="421.7" cy="330.7" r="2.2" fill="#fff" stroke="#83b84a" stroke-width="0.75"/><path d="M420.5 330.7H422.9" stroke="#83b84a" stroke-width="0.75"/><rect x="240.8" y="249.8" width="96.6" height="45" rx="5" fill="#f17c7a" stroke="#36383a" stroke-width="3"/><path d="M258.5 250V229.7C258.5 225.7 260.79999999999995 222.2 262.4 220.2C264.0 222.2 266.29999999999995 225.7 266.29999999999995 229.7V250Z" fill="#36383a" stroke="#36383a" stroke-width="2.8" stroke-linejoin="round"/><rect x="259.95" y="230.79999999999998" width="4.9" height="20.800000000000004" fill="#3ec0cf"/><clipPath id="cc262"><rect x="259.95" y="230.79999999999998" width="4.9" height="20.800000000000004"/></clipPath><g clip-path="url(#cc262)"><path d="M259.95 233.7L264.84999999999997 230.7V233.5L259.95 236.5Z" fill="#c9f3f3"/><path d="M259.95 239.89999999999998L264.84999999999997 236.89999999999998V239.7L259.95 242.7Z" fill="#c9f3f3"/><path d="M259.95 246.1L264.84999999999997 243.1V245.9L259.95 248.9Z" fill="#c9f3f3"/><path d="M259.95 252.29999999999998L264.84999999999997 249.29999999999998V252.1L259.95 255.1Z" fill="#c9f3f3"/><path d="M259.95 258.5L264.84999999999997 255.5V258.3L259.95 261.3Z" fill="#c9f3f3"/></g><path d="M262.4 223.6C265.0 226.6 264.79999999999995 230.39999999999998 262.4 230.6C260.0 230.39999999999998 259.79999999999995 226.6 262.4 223.6Z" fill="#f9bf6a"/><path d="M287.5 250V230.4C287.5 226.4 289.79999999999995 222.9 291.4 220.9C293.0 222.9 295.29999999999995 226.4 295.29999999999995 230.4V250Z" fill="#36383a" stroke="#36383a" stroke-width="2.8" stroke-linejoin="round"/><rect x="288.95" y="231.5" width="4.9" height="20.099999999999987" fill="#3ec0cf"/><clipPath id="cc291"><rect x="288.95" y="231.5" width="4.9" height="20.099999999999987"/></clipPath><g clip-path="url(#cc291)"><path d="M288.95 234.4L293.84999999999997 231.4V234.20000000000002L288.95 237.20000000000002Z" fill="#c9f3f3"/><path d="M288.95 240.6L293.84999999999997 237.6V240.4L288.95 243.4Z" fill="#c9f3f3"/><path d="M288.95 246.8L293.84999999999997 243.8V246.60000000000002L288.95 249.60000000000002Z" fill="#c9f3f3"/><path d="M288.95 253.0L293.84999999999997 250.0V252.8L288.95 255.8Z" fill="#c9f3f3"/><path d="M288.95 259.2L293.84999999999997 256.2V259.0L288.95 262.0Z" fill="#c9f3f3"/></g><path d="M291.4 224.3C294.0 227.3 293.79999999999995 231.1 291.4 231.3C289.0 231.1 288.79999999999995 227.3 291.4 224.3Z" fill="#f9bf6a"/><path d="M312.20000000000005 250V232.3C312.20000000000005 228.3 314.5 224.8 316.1 222.8C317.70000000000005 224.8 320.0 228.3 320.0 232.3V250Z" fill="#36383a" stroke="#36383a" stroke-width="2.8" stroke-linejoin="round"/><rect x="313.65000000000003" y="233.4" width="4.9" height="18.19999999999998" fill="#3ec0cf"/><clipPath id="cc316"><rect x="313.65000000000003" y="233.4" width="4.9" height="18.19999999999998"/></clipPath><g clip-path="url(#cc316)"><path d="M313.65000000000003 236.3L318.55 233.3V236.10000000000002L313.65000000000003 239.10000000000002Z" fill="#c9f3f3"/><path d="M313.65000000000003 242.5L318.55 239.5V242.3L313.65000000000003 245.3Z" fill="#c9f3f3"/><path d="M313.65000000000003 248.70000000000002L318.55 245.70000000000002V248.50000000000003L313.65000000000003 251.50000000000003Z" fill="#c9f3f3"/><path d="M313.65000000000003 254.9L318.55 251.9V254.70000000000002L313.65000000000003 257.7Z" fill="#c9f3f3"/><path d="M313.65000000000003 261.1L318.55 258.1V260.90000000000003L313.65000000000003 263.90000000000003Z" fill="#c9f3f3"/></g><path d="M316.1 226.20000000000002C318.70000000000005 229.20000000000002 318.5 233.0 316.1 233.20000000000002C313.70000000000005 233.0 313.5 229.20000000000002 316.1 226.20000000000002Z" fill="#f9bf6a"/><path d="M242.3 251.3H335.9V254.5C333.9 260.5 314.5 260.5 312.5 254.5C310.5 260.5 291.1 260.5 289.1 254.5C287.1 260.5 267.70000000000005 260.5 265.70000000000005 254.5C263.7 260.5 244.3 260.5 242.3 254.5Z" fill="#fbb3bd"/><clipPath id="ck"><rect x="242.3" y="251.3" width="93.6" height="42" rx="3.5"/></clipPath><g clip-path="url(#ck)"><polygon points="247.0,270.5 248.3,276.4 254.2,278.0 249.0,281.1 249.4,287.1 244.8,283.1 239.2,285.3 241.6,279.8 237.7,275.1 243.8,275.6" fill="#fff"/><polygon points="273.6,268.3 276.4,273.7 282.5,273.7 278.3,278.0 280.2,283.7 274.7,281.0 269.9,284.6 270.8,278.6 265.8,275.1 271.8,274.1" fill="#fff"/><polygon points="304.5,274.0 306.1,279.9 312.0,281.2 306.9,284.4 307.4,290.5 302.7,286.6 297.2,289.0 299.4,283.4 295.4,278.8 301.4,279.2" fill="#fff"/><polygon points="331.0,268.1 334.1,273.3 340.1,272.9 336.1,277.5 338.3,283.1 332.8,280.7 328.1,284.6 328.6,278.5 323.5,275.3 329.4,274.0" fill="#fff"/></g><rect x="342.2" y="256.6" width="4" height="3.8" rx="0.8" fill="#fff" stroke="#6dbb5a" stroke-width="0.7"/><path d="M343 258.5H345.4" stroke="#6dbb5a" stroke-width="0.7"/><g stroke="#2f4f55" stroke-width="0.8" stroke-linejoin="round"><rect x="169.3" y="128.2" width="4.4" height="2" fill="#f5b942"/><rect x="164.5" y="138" width="3" height="3" rx="0.8" fill="#2f4f55"/><rect x="175.5" y="138" width="3" height="3" rx="0.8" fill="#2f4f55"/><path d="M166.3 134.2L167.8 130.6C168 130.2 168.4 130 168.9 130H174.1C174.6 130 175 130.2 175.2 130.6L176.7 134.2Z" fill="#c9f0ee"/><path d="M164.2 134H178.8C179.6 134 180 134.6 180 135.4V138.2C180 139 179.6 139.4 178.8 139.4H164.2C163.4 139.4 163 139 163 138.2V135.4C163 134.6 163.4 134 164.2 134Z" fill="#5ccfc6"/><path d="M162.8 133.2H164.8M178.2 133.2H180.2" /></g><circle cx="165.6" cy="136.3" r="0.9" fill="#fff"/><circle cx="177.4" cy="136.3" r="0.9" fill="#fff"/><g stroke="#6a5530" stroke-width="0.8" stroke-linejoin="round"><circle cx="157" cy="169.3" r="1.8" fill="#f7c9c4"/><circle cx="161.6" cy="169.3" r="1.8" fill="#f7c9c4"/><rect x="152.3" y="175" width="14" height="9.2" fill="#fbe18c"/><rect x="151.2" y="171.8" width="16.2" height="3.4" fill="#fbe18c"/><path d="M159.3 171.8V184.2" /></g><g><path d="M152.2 233.6H166.5L168 243.8H150.7Z" fill="#e84a40"/><path d="M154 233.2C155 232 156.5 232 157.5 233.2M158 233.2C159 232 160.5 232 161.5 233.2" stroke="#7a2a22" stroke-width="0.7" fill="none"/><rect x="150.4" y="243.6" width="17.9" height="1.3" fill="#3a2a28"/><circle cx="155.5" cy="237" r="0.6" fill="#fff"/><circle cx="159.5" cy="236.5" r="0.6" fill="#fff"/><circle cx="163.5" cy="237" r="0.6" fill="#fff"/><circle cx="156" cy="240.8" r="0.6" fill="#fff"/><circle cx="160" cy="241" r="0.6" fill="#fff"/><circle cx="164" cy="240.8" r="0.6" fill="#fff"/></g><g stroke="#2f6f78" stroke-width="0.7" stroke-linejoin="round" stroke-linecap="round"><circle cx="160.8" cy="306.2" r="1.6" fill="#5cc8cf"/><path d="M154 308.6L158.5 309.6H163L167.8 308.4" fill="none" stroke-width="1"/><path d="M159.2 308.6H162.4L162.8 313L164.8 317.6H157L159 313Z" fill="#5cc8cf"/><path d="M161 317.6V323.5M160.6 318.4L158.6 319.6" fill="none" stroke-width="0.9"/></g><path d="M164 379.4V368.6L168.6 373.8L172.1 367.9L175.6 373.8L180.2 368.6V379.4Z" fill="#fbd872" stroke="#7a5a2a" stroke-width="0.8" stroke-linejoin="round"/><circle cx="172.1" cy="376.4" r="0.9" fill="#e0453a"/><rect x="382.8" y="173" width="11.6" height="14.5" rx="0.8" fill="#fff" stroke="#8d8080" stroke-width="0.8"/><path d="M385.6 173.6L388.6 169.6L391.6 173.6Z" fill="#ec8d9c" stroke="#e17a8b" stroke-width="0.6" stroke-linejoin="round"/><path d="M385 177.6H392.2M385 180.4H392.2M385 183.2H392.2" stroke="#cfcfcf" stroke-width="0.7"/><path d="M386.6 243.4C386.6 242.2 388.6 242.2 388.6 243.4L389 249.5C389.4 252 392.4 253.5 392.4 255.5V259.4H382.8V255.5C382.8 253.5 385.8 252 386.2 249.5Z" fill="#62d2d0" stroke="#4b6470" stroke-width="0.8" stroke-linejoin="round"/><rect x="383.2" y="255.8" width="8.8" height="3.3" fill="#fff"/><path d="M382.8 255.6H392.4" stroke="#4b6470" stroke-width="0.6"/><path d="M384 329.5H395L394.2 337.2C394 338.6 392.6 339.2 389.5 339.2C386.4 339.2 385 338.6 384.8 337.2Z" fill="#fde6c2" stroke="#b89878" stroke-width="0.6"/><path d="M383.2 329.6C383.2 326.2 386 324 389.5 324C393 324 395.8 326.2 395.8 329.6Z" fill="#fbeaea" stroke="#b06a6a" stroke-width="0.5"/><path d="M383.3 328.6C384.5 327.2 385.4 328 386.4 327.2C387.4 326.4 388.4 327.8 389.5 327C390.6 326.2 391.6 327.8 392.6 327C393.6 326.4 394.6 327.4 395.7 328.6V329.8C394.6 331.2 393.6 329.8 392.6 330.8C391.6 331.8 390.6 330 389.5 331C388.4 332 387.4 329.8 386.4 330.8C385.4 331.6 384.2 331 383.3 329.8Z" fill="#c9383e"/><path d="M389.3 324.2C389 322.6 390 321.6 391.4 321.6" stroke="#c0394a" stroke-width="0.9" fill="none"/><circle cx="389.2" cy="324.6" r="1" fill="#d8454e"/></svg>
<div class="t" style="left:131.3px;top:129.3px;font-size:5.3px;color:#303030;transform:translate(-50%,-50%);">送宾客</div>
<div class="t" style="left:129.6px;top:142.4px;font-size:5.3px;color:#303030;transform:translate(-50%,-50%);">清理现场</div>
<div class="t" style="left:183px;top:135.0px;font-size:6.4px;color:#303030;transform:translate(0,-50%);">结束</div>
<div class="t" style="left:170.4px;top:176.6px;font-size:6.4px;color:#303030;transform:translate(0,-50%);">回送礼物</div>
<div class="t" style="left:119.3px;top:213.9px;font-size:5.3px;color:#303030;transform:translate(-50%,-50%);">吹蜡烛</div>
<div class="t" style="left:122.5px;top:227.2px;font-size:5.3px;color:#303030;transform:translate(-50%,-50%);">许愿</div>
<div class="t" style="left:122.5px;top:239.9px;font-size:5.3px;color:#303030;transform:translate(-50%,-50%);">唱歌</div>
<div class="t" style="left:119.3px;top:252.6px;font-size:5.3px;color:#303030;transform:translate(-50%,-50%);">送礼物</div>
<div class="t" style="left:119.3px;top:265.5px;font-size:5.3px;color:#303030;transform:translate(-50%,-50%);">吃蛋糕</div>
<div class="t" style="left:170.7px;top:240.1px;font-size:6.4px;color:#303030;transform:translate(0,-50%);">蛋糕环节</div>
<div class="t" style="left:123.7px;top:295.9px;font-size:5.3px;color:#303030;transform:translate(-50%,-50%);">活动 1</div>
<div class="t" style="left:123.7px;top:308.9px;font-size:5.3px;color:#303030;transform:translate(-50%,-50%);">活动 2</div>
<div class="t" style="left:123.7px;top:321.7px;font-size:5.3px;color:#303030;transform:translate(-50%,-50%);">活动 3</div>
<div class="t" style="left:123.7px;top:334.7px;font-size:5.3px;color:#303030;transform:translate(-50%,-50%);">活动 4</div>
<div class="t" style="left:171.2px;top:315.3px;font-size:6.4px;color:#303030;transform:translate(0,-50%);">活动安排</div>
<div class="t" style="left:134.5px;top:361.6px;font-size:5.3px;color:#303030;transform:translate(-50%,-50%);">纸巾</div>
<div class="t" style="left:132.5px;top:375.1px;font-size:5.3px;color:#303030;transform:translate(-50%,-50%);">碟、盘</div>
<div class="t" style="left:134.5px;top:387.6px;font-size:5.3px;color:#303030;transform:translate(-50%,-50%);">纸杯</div>
<div class="t" style="left:183.2px;top:374.6px;font-size:6.4px;color:#303030;transform:translate(0,-50%);">用品</div>
<div class="t" style="left:450.5px;top:165.5px;font-size:5.3px;color:#303030;transform:translate(-50%,-50%);">日期</div>
<div class="t" style="left:450.5px;top:179.2px;font-size:5.3px;color:#303030;transform:translate(-50%,-50%);">地址</div>
<div class="t" style="left:450.5px;top:192.5px;font-size:5.3px;color:#303030;transform:translate(-50%,-50%);">主题</div>
<div class="t" style="left:485.4px;top:192.5px;font-size:5.3px;color:#303030;transform:translate(-50%,-50%);">生日快乐</div>
<div class="t" style="left:397.3px;top:179.1px;font-size:6.4px;color:#303030;transform:translate(0,-50%);">基本信息</div>
<div class="t" style="left:454.4px;top:219.3px;font-size:5.3px;color:#303030;transform:translate(-50%,-50%);">宾客名单</div>
<div class="t" style="left:451.5px;top:232.5px;font-size:5.3px;color:#303030;transform:translate(-50%,-50%);">邀请函</div>
<div class="t" style="left:458.7px;top:245.5px;font-size:5.3px;color:#303030;transform:translate(-50%,-50%);">接纸邀请名单</div>
<div class="t" style="left:456.4px;top:257.9px;font-size:5.3px;color:#303030;transform:translate(-50%,-50%);">购买装饰品</div>
<div class="t" style="left:453.8px;top:271.5px;font-size:5.3px;color:#303030;transform:translate(-50%,-50%);">卫生清洁</div>
<div class="t" style="left:453.8px;top:284.6px;font-size:5.3px;color:#303030;transform:translate(-50%,-50%);">布置场地</div>
<div class="t" style="left:396px;top:251.3px;font-size:6.4px;color:#303030;transform:translate(0,-50%);">准备工作</div>
<div class="t" style="left:439.5px;top:311.8px;font-size:5.3px;color:#303030;transform:translate(-50%,-50%);">茶水</div>
<div class="t" style="left:439.5px;top:325.1px;font-size:5.3px;color:#303030;transform:translate(-50%,-50%);">点心</div>
<div class="t" style="left:439.5px;top:337.7px;font-size:5.3px;color:#303030;transform:translate(-50%,-50%);">食品</div>
<div class="t" style="left:439.5px;top:350.7px;font-size:5.3px;color:#303030;transform:translate(-50%,-50%);">其他</div>
<div class="t" style="left:399.5px;top:331.5px;font-size:6.4px;color:#303030;transform:translate(0,-50%);">食物</div>
<div style="left:552px;top:71px;width:8.5px;height:359px;background:#e6e6e6;border-left:1px solid #d8d8d8;border-right:1px solid #d8d8d8;"></div>
<div style="left:552px;top:174.5px;width:8.5px;height:145.5px;background:#fff;border:1px solid #cfcfcf;"></div>
<div style="left:552px;top:71px;width:8.5px;height:8.5px;background:#fff;border:1px solid #d0d0d0;"></div>
<svg style="left:553.5px;top:73.5px;" width="5" height="3.5" viewBox="0 0 5 3.5"><path d="M0.8 2.8L2.5 1L4.2 2.8" stroke="#444" fill="none" stroke-width="0.9"/></svg>
<div style="left:552px;top:422px;width:8.5px;height:8.5px;background:#fff;border:1px solid #d0d0d0;"></div>
<svg style="left:553.5px;top:424.7px;" width="5" height="3.5" viewBox="0 0 5 3.5"><path d="M0.8 0.8L2.5 2.6L4.2 0.8" stroke="#444" fill="none" stroke-width="0.9"/></svg>
<div class="t" style="left:563.6px;top:66.5px;font-size:6.6px;color:#333;transform:translate(0,-50%);">剪贴画</div>
<svg style="left:689.5px;top:62.5px;" width="6" height="8" viewBox="0 0 6 8"><path d="M1.8 0.8H4.2V4.2H1.8ZM0.8 4.4H5.2M3 4.4V7.2" stroke="#444" fill="none" stroke-width="0.9"/></svg>
<div style="left:560.5px;top:71px;width:15.5px;height:374.5px;background:#fff;border-right:1px solid #e2e2e2;"></div>
<div style="left:561px;top:146.8px;width:14px;height:14.2px;background:#dadada;"></div>
<svg style="left:563.5px;top:80.5px;" width="10" height="10" viewBox="0 0 10 10"><path d="M2.6 1.6L7.6 4L5.2 8.6L0.8 6.2Z" stroke="#2a2a2a" fill="none" stroke-width="1" stroke-linejoin="round"/><path d="M7.6 4.4L8.8 8.8" stroke="#2a2a2a" fill="none" stroke-width="1.4"/></svg>
<svg style="left:564px;top:104.5px;" width="9" height="8" viewBox="0 0 9 8"><path d="M3 1.2H8.6M3 4H8.6M3 6.8H8.6" stroke="#222" stroke-width="1.3"/><path d="M0.4 1.2H1.8M0.4 4H1.8M0.4 6.8H1.8" stroke="#222" stroke-width="1.3"/></svg>
<svg style="left:564px;top:127px;" width="8.5" height="9" viewBox="0 0 8.5 9"><rect x="0.6" y="0.6" width="7.2" height="7.8" stroke="#2a2a2a" fill="none" stroke-width="1"/><rect x="2.6" y="3.4" width="3.2" height="3" stroke="#2a2a2a" fill="none" stroke-width="0.8"/><path d="M2.4 3.6L4.2 2.2L6 3.6" stroke="#2a2a2a" fill="none" stroke-width="0.8"/></svg>
<svg style="left:563.5px;top:149.5px;" width="10" height="9.5" viewBox="0 0 10 9.5"><circle cx="5" cy="2.9" r="2" stroke="#2a2a2a" fill="none" stroke-width="1"/><circle cx="2.9" cy="6.3" r="2" stroke="#2a2a2a" fill="none" stroke-width="1"/><circle cx="7.1" cy="6.3" r="2" stroke="#2a2a2a" fill="none" stroke-width="1"/><path d="M5 6.3V9.3" stroke="#2a2a2a" fill="none" stroke-width="1"/></svg>
<svg style="left:564px;top:172.5px;" width="8.5" height="9" viewBox="0 0 8.5 9"><rect x="0.6" y="1.4" width="7.2" height="7" rx="0.8" stroke="#2a2a2a" fill="none" stroke-width="1"/><path d="M2.4 0.4V2.2M6 0.4V2.2" stroke="#2a2a2a" fill="none" stroke-width="1"/><path d="M2.6 5.2L3.8 6.4L6 4" stroke="#2a2a2a" fill="none" stroke-width="0.9"/></svg>
<svg style="left:564px;top:196px;" width="8.5" height="9" viewBox="0 0 8.5 9"><rect x="0.6" y="0.6" width="7.2" height="7.8" stroke="#2a2a2a" fill="none" stroke-width="1"/><circle cx="4.2" cy="3.6" r="1.1" fill="#2a2a2a"/><path d="M2.2 7C2.2 5 6.2 5 6.2 7Z" fill="#2a2a2a"/></svg>
<svg style="left:580.5px;top:80px;" width="8" height="7" viewBox="0 0 8 7"><rect x="1.6" y="0.6" width="4.8" height="2.2" stroke="#333" fill="none" stroke-width="0.8"/><rect x="0.6" y="2.8" width="6.8" height="3.6" fill="#333"/><path d="M2 4.6H6" stroke="#fff" stroke-width="0.6"/></svg>
<div class="t" style="left:590.8px;top:84.3px;font-size:3.6px;color:#333;transform:translate(-50%,-50%);">▾</div>
<div style="left:594.3px;top:78.5px;width:93.3px;height:10px;background:#fff;border:1px solid #d8d8d8;"></div>
<div class="t" style="left:683.6px;top:84.3px;font-size:3.6px;color:#333;transform:translate(-50%,-50%);">▾</div>
<svg style="left:689.5px;top:79.5px;" width="8" height="8" viewBox="0 0 8 8"><circle cx="3.2" cy="3.2" r="2.5" stroke="#333" fill="none" stroke-width="0.9"/><path d="M5 5L7.4 7.4" stroke="#333" stroke-width="1.1"/></svg>
<div style="left:577px;top:92px;width:122px;height:1px;background:#ececec;"></div>
<svg style="left:580px;top:94px;" width="6.5" height="7.5" viewBox="0 0 6.5 7.5"><rect x="0.5" y="0.5" width="5.4" height="6.4" stroke="#333" fill="none" stroke-width="0.9"/><path d="M3.2 5.4V2.2M2 3.4L3.2 2.2L4.4 3.4" stroke="#333" fill="none" stroke-width="0.8"/></svg>
<div class="t" style="left:588.7px;top:98.5px;font-size:5.7px;color:#333;transform:translate(0,-50%);">商务办公</div>
<svg style="left:691px;top:95px;" width="6" height="6" viewBox="0 0 6 6"><path d="M1 1L5 5M5 1L1 5" stroke="#333" stroke-width="0.9"/></svg>
<div style="left:577px;top:103.2px;width:114px;height:1px;background:#e6e6e6;"></div>
<div style="left:691px;top:103.5px;width:8px;height:335px;background:#e6e6e6;border-left:1px solid #dcdcdc;"></div>
<div style="left:691px;top:103.5px;width:8px;height:9px;background:#fff;border:1px solid #d0d0d0;"></div>
<svg style="left:692.5px;top:106.5px;" width="5" height="3.5" viewBox="0 0 5 3.5"><path d="M0.8 2.8L2.5 1L4.2 2.8" stroke="#444" fill="none" stroke-width="0.9"/></svg>
<div style="left:691px;top:112.5px;width:8px;height:174px;background:#fff;border:1px solid #d0d0d0;"></div>
<div style="left:691px;top:429.5px;width:8px;height:9px;background:#fff;border:1px solid #d0d0d0;"></div>
<svg style="left:692.5px;top:432.5px;" width="5" height="3.5" viewBox="0 0 5 3.5"><path d="M0.8 0.8L2.5 2.6L4.2 0.8" stroke="#444" fill="none" stroke-width="0.9"/></svg>
<div style="left:699px;top:59px;width:1px;height:401px;background:#d8d8d8;"></div>
<svg style="left:583.3px;top:107.4px;" width="20" height="20" viewBox="0 0 20 20"><rect x="8.2" y="0.6" width="3.6" height="4.4" fill="#f6c977" stroke="#c99a4a" stroke-width="0.5"/><rect x="3.6" y="3.8" width="12.8" height="15.2" fill="#5bc8d4"/><rect x="3.6" y="3.8" width="12.8" height="3.2" fill="#eef9fa"/><rect x="3.6" y="3.8" width="12.8" height="15.2" fill="none" stroke="#49aebb" stroke-width="0.5"/><circle cx="10" cy="11.2" r="2.2" fill="#1f4757"/><path d="M5.8 18C5.8 13.6 14.2 13.6 14.2 18Z" fill="#1f4757"/></svg>
<svg style="left:610.8px;top:107.4px;" width="20" height="20" viewBox="0 0 20 20"><rect x="3.4" y="0.8" width="13.2" height="18.4" fill="#fff" stroke="#5a6070" stroke-width="0.8"/><circle cx="10" cy="4.6" r="1.6" fill="#2b3442"/><path d="M7 9C7 6.4 13 6.4 13 9Z" fill="#2b3442"/><path d="M5.4 11.4H14.6" stroke="#f0897a" stroke-width="0.8"/><path d="M5.4 13.6H14.6M5.4 15.6H14.6" stroke="#c8c8cc" stroke-width="0.7"/></svg>
<svg style="left:638.4px;top:107.4px;" width="20" height="20" viewBox="0 0 20 20"><path d="M10 1C13.4 1 14.6 4 13.4 7.4C12.6 9.8 12.4 11.6 13 14.6H7C7.6 11.6 7.4 9.8 6.6 7.4C5.4 4 6.6 1 10 1Z" fill="#fff" stroke="#9a9a9a" stroke-width="0.7"/><rect x="3.4" y="14.6" width="13.2" height="2" fill="#fff" stroke="#d88" stroke-width="0.5"/><rect x="3.4" y="16.6" width="13.2" height="2.2" fill="#e9686c"/></svg>
<svg style="left:666.2px;top:107.4px;" width="20" height="20" viewBox="0 0 20 20"><rect x="5" y="1.4" width="10" height="5" fill="#fff" stroke="#9fb0b8" stroke-width="0.6"/><rect x="2" y="5.6" width="16" height="9" rx="1" fill="#5bc8d4"/><rect x="5.2" y="11.4" width="9.6" height="7" fill="#fff" stroke="#9fb0b8" stroke-width="0.6"/><path d="M6.8 14H13.2M6.8 16H13.2" stroke="#d0d8dc" stroke-width="0.6"/></svg>
<svg style="left:583.3px;top:134.8px;" width="20" height="20" viewBox="0 0 20 20"><circle cx="10" cy="10" r="7.7" fill="#fbe9a6" stroke="#dfbd5e" stroke-width="0.9"/><circle cx="10" cy="10" r="5.8" fill="#fdf1c4" stroke="#ecd386" stroke-width="0.6"/><text x="10" y="12.9" font-size="8.2" text-anchor="middle" fill="#5b4523" stroke="#5b4523" stroke-width="0.25" font-family="Liberation Sans,sans-serif">€</text></svg>
<svg style="left:610.8px;top:134.8px;" width="20" height="20" viewBox="0 0 20 20"><circle cx="10" cy="10" r="7.7" fill="#fbe9a6" stroke="#dfbd5e" stroke-width="0.9"/><circle cx="10" cy="10" r="5.8" fill="#fdf1c4" stroke="#ecd386" stroke-width="0.6"/><text x="10" y="12.9" font-size="8.2" text-anchor="middle" fill="#5b4523" stroke="#5b4523" stroke-width="0.25" font-family="Liberation Sans,sans-serif">¥</text></svg>
<svg style="left:638.4px;top:134.8px;" width="20" height="20" viewBox="0 0 20 20"><circle cx="10" cy="10" r="7.7" fill="#fbe9a6" stroke="#dfbd5e" stroke-width="0.9"/><circle cx="10" cy="10" r="5.8" fill="#fdf1c4" stroke="#ecd386" stroke-width="0.6"/><text x="10" y="12.9" font-size="8.2" text-anchor="middle" fill="#5b4523" stroke="#5b4523" stroke-width="0.25" font-family="Liberation Sans,sans-serif">£</text></svg>
<svg style="left:666.2px;top:134.8px;" width="20" height="20" viewBox="0 0 20 20"><circle cx="10" cy="10" r="7.7" fill="#fbe9a6" stroke="#dfbd5e" stroke-width="0.9"/><circle cx="10" cy="10" r="5.8" fill="#fdf1c4" stroke="#ecd386" stroke-width="0.6"/><text x="10" y="12.9" font-size="8.2" text-anchor="middle" fill="#5b4523" stroke="#5b4523" stroke-width="0.25" font-family="Liberation Sans,sans-serif">$</text></svg>
<svg style="left:583.3px;top:162.6px;" width="20" height="20" viewBox="0 0 20 20"><path d="M7 3.2L6 1.2H14L13 3.2Z" fill="#f6d56e" stroke="#a98a3a" stroke-width="0.7" stroke-linejoin="round"/><path d="M7.2 3.4H12.8C15 6 17.4 10.5 17.2 14.5C17 17.6 15 18.4 10 18.4C5 18.4 3 17.6 2.8 14.5C2.6 10.5 5 6 7.2 3.4Z" fill="#f6d56e" stroke="#a98a3a" stroke-width="0.7"/><path d="M7 3.6H13" stroke="#b99b45" stroke-width="0.8"/><text x="10" y="15.4" font-size="8.4" text-anchor="middle" fill="#5b4523" stroke="#5b4523" stroke-width="0.25" font-family="Liberation Sans,sans-serif">$</text></svg>
<svg style="left:610.8px;top:162.6px;" width="20" height="20" viewBox="0 0 20 20"><path d="M7 3.2L6 1.2H14L13 3.2Z" fill="#f6d56e" stroke="#a98a3a" stroke-width="0.7" stroke-linejoin="round"/><path d="M7.2 3.4H12.8C15 6 17.4 10.5 17.2 14.5C17 17.6 15 18.4 10 18.4C5 18.4 3 17.6 2.8 14.5C2.6 10.5 5 6 7.2 3.4Z" fill="#f6d56e" stroke="#a98a3a" stroke-width="0.7"/><path d="M7 3.6H13" stroke="#b99b45" stroke-width="0.8"/><text x="10" y="15.4" font-size="8.4" text-anchor="middle" fill="#5b4523" stroke="#5b4523" stroke-width="0.25" font-family="Liberation Sans,sans-serif">¥</text></svg>
<svg style="left:638.4px;top:162.6px;" width="20" height="20" viewBox="0 0 20 20"><path d="M7 3.2L6 1.2H14L13 3.2Z" fill="#f6d56e" stroke="#a98a3a" stroke-width="0.7" stroke-linejoin="round"/><path d="M7.2 3.4H12.8C15 6 17.4 10.5 17.2 14.5C17 17.6 15 18.4 10 18.4C5 18.4 3 17.6 2.8 14.5C2.6 10.5 5 6 7.2 3.4Z" fill="#f6d56e" stroke="#a98a3a" stroke-width="0.7"/><path d="M7 3.6H13" stroke="#b99b45" stroke-width="0.8"/><text x="10" y="15.4" font-size="8.4" text-anchor="middle" fill="#5b4523" stroke="#5b4523" stroke-width="0.25" font-family="Liberation Sans,sans-serif">€</text></svg>
<svg style="left:666.2px;top:162.6px;" width="20" height="20" viewBox="0 0 20 20"><path d="M7 3.2L6 1.2H14L13 3.2Z" fill="#f6d56e" stroke="#a98a3a" stroke-width="0.7" stroke-linejoin="round"/><path d="M7.2 3.4H12.8C15 6 17.4 10.5 17.2 14.5C17 17.6 15 18.4 10 18.4C5 18.4 3 17.6 2.8 14.5C2.6 10.5 5 6 7.2 3.4Z" fill="#f6d56e" stroke="#a98a3a" stroke-width="0.7"/><path d="M7 3.6H13" stroke="#b99b45" stroke-width="0.8"/><text x="10" y="15.4" font-size="8.4" text-anchor="middle" fill="#5b4523" stroke="#5b4523" stroke-width="0.25" font-family="Liberation Sans,sans-serif">£</text></svg>
<svg style="left:583.3px;top:190px;" width="20" height="20" viewBox="0 0 20 20"><path d="M3 3.4H11.6V11.4H9L8 15.4C7.6 17 5.8 16.6 6 15L6.4 11.8H3.4C2 11.8 1.6 10.8 2.2 10C1.4 9.4 1.6 8.4 2.4 8C1.6 7.2 2 6.2 2.8 6C2.2 5 2.4 3.4 3 3.4Z" fill="#fff" stroke="#444" stroke-width="0.7" stroke-linejoin="round"/><rect x="11.8" y="2.4" width="5.4" height="9.6" fill="#2c3e50"/><circle cx="14.5" cy="10" r="0.7" fill="#fff"/></svg>
<svg style="left:610.8px;top:190px;" width="20" height="20" viewBox="0 0 20 20"><path d="M17 17.4H8.4V9.4H11L12 5.4C12.4 3.8 14.2 4.2 14 5.8L13.6 9H16.6C18 9 18.4 10 17.8 10.8C18.6 11.4 18.4 12.4 17.6 12.8C18.4 13.6 18 14.6 17.2 14.8C17.8 15.8 17.6 17.4 17 17.4Z" fill="#fff" stroke="#444" stroke-width="0.7" stroke-linejoin="round"/><rect x="2.8" y="8.8" width="5.4" height="9.6" fill="#2c3e50"/><circle cx="5.5" cy="16.4" r="0.7" fill="#fff"/></svg>
<svg style="left:638.4px;top:190px;" width="20" height="20" viewBox="0 0 20 20"><rect x="2.4" y="3.4" width="10.6" height="15.4" rx="5.3" fill="#5bc8d4" stroke="#3a8a98" stroke-width="0.7"/><rect x="6.4" y="5" width="2.6" height="6" rx="1.3" fill="#fff"/><path d="M7.7 3.4C7.7 0.6 15 0 15.6 4V14C15.6 17 18 16.4 17.8 13V5" fill="none" stroke="#9a9a9a" stroke-width="0.7"/></svg>
<svg style="left:666.2px;top:190px;" width="20" height="20" viewBox="0 0 20 20"><circle cx="10" cy="10" r="8.2" fill="#fff" stroke="#556" stroke-width="0.7"/><path d="M6 4.6C8 3 11.4 3.4 12.4 5C11 6.4 12.4 8 10.4 8.8C9 9.4 8.6 11 7 10.6C5.4 10 4.6 6.4 6 4.6Z" fill="#5bc8d4"/><path d="M11.4 10.6C13 10 15 11 14.6 12.6C14.2 14.2 12.6 16 11.6 15.4C10.8 14.6 10.4 11.6 11.4 10.6Z" fill="#5bc8d4"/><path d="M14.6 5.6C15.6 6 16.4 7.4 16.2 8.4C15.2 8.4 14.2 6.8 14.6 5.6Z" fill="#5bc8d4"/></svg>
<svg style="left:583.3px;top:217.8px;" width="20" height="20" viewBox="0 0 20 20"><path d="M1 7L5 2H15L19 7L10 18Z" fill="#dedede" stroke="#8a8a8a" stroke-width="0.7" stroke-linejoin="round"/><path d="M1 7H19M5 2L10 7L15 2M10 7V18" stroke="#8a8a8a" stroke-width="0.6" fill="none"/><path d="M5 2L10 7L15 2Z" fill="#f4f4f4" stroke="#8a8a8a" stroke-width="0.6"/></svg>
<svg style="left:610.8px;top:217.8px;" width="20" height="20" viewBox="0 0 20 20"><rect x="2.6" y="0.8" width="14.8" height="18.4" fill="#fff" stroke="#777" stroke-width="0.8"/><path d="M5 4.6H15M5 7H15M5 9.4H15M5 11.8H10" stroke="#c4c4c4" stroke-width="0.7"/></svg>
<svg style="left:638.4px;top:217.8px;" width="20" height="20" viewBox="0 0 20 20"><rect x="1.6" y="3.4" width="16.8" height="15" rx="1" fill="#fff" stroke="#c9a24e" stroke-width="0.7"/><rect x="1.6" y="3.4" width="16.8" height="4.6" fill="#fbe08f" stroke="#c9a24e" stroke-width="0.7"/><path d="M5.6 1.4V5M14.4 1.4V5" stroke="#a07a30" stroke-width="1.2"/><text x="10" y="15.6" font-size="6.6" font-weight="bold" text-anchor="middle" fill="#2a3568" font-family="Liberation Sans,sans-serif">30</text></svg>
<svg style="left:666.2px;top:217.8px;" width="20" height="20" viewBox="0 0 20 20"><path d="M2 8.4L10 2L18 8.4V18H2Z" fill="#5bc8d4" stroke="#3d9aaa" stroke-width="0.6" stroke-linejoin="round"/><path d="M4.2 4.6H15.8V12.6L10 15L4.2 12.6Z" fill="#fff"/><path d="M6.4 7H13.6" stroke="#f0897a" stroke-width="0.7"/><path d="M2 8.6L10 13.6L18 8.6V18H2Z" fill="#5bc8d4" stroke="#3d9aaa" stroke-width="0.6" stroke-linejoin="round"/><path d="M2 18L8.4 12.6M18 18L11.6 12.6" stroke="#3d9aaa" stroke-width="0.6"/></svg>
<svg style="left:583.3px;top:245.2px;" width="20" height="20" viewBox="0 0 20 20"><rect x="0.8" y="3.4" width="18.4" height="13.2" fill="#5bc8d4" stroke="#3d9aaa" stroke-width="0.7"/><path d="M0.8 3.4L10 10.8L19.2 3.4M0.8 16.6L7.6 9M19.2 16.6L12.4 9" stroke="#3d9aaa" stroke-width="0.6" fill="none"/></svg>
<svg style="left:610.8px;top:245.2px;" width="20" height="20" viewBox="0 0 20 20"><circle cx="10" cy="10" r="8.4" fill="#fff" stroke="#777" stroke-width="0.7"/><path d="M10 4V10H15" stroke="#777" stroke-width="0.8" fill="none"/></svg>
<svg style="left:638.4px;top:245.2px;" width="20" height="20" viewBox="0 0 20 20"><path d="M2 17.6L3.6 13L14.6 2C15.6 1 18.4 3.6 17.4 4.8L6.4 15.8Z" fill="#f6bb45" stroke="#6a5530" stroke-width="0.7" stroke-linejoin="round"/><path d="M2 17.6L3.6 13L6.4 15.8Z" fill="#fbe9c8" stroke="#6a5530" stroke-width="0.6" stroke-linejoin="round"/></svg>
<svg style="left:666.2px;top:245.2px;" width="20" height="20" viewBox="0 0 20 20"><path d="M7 5V2.6H13V5" stroke="#556" stroke-width="0.9" fill="none"/><rect x="1.8" y="4.8" width="16.4" height="13.4" rx="2" fill="#5bc8d4" stroke="#3d8a98" stroke-width="0.7"/><path d="M1.8 10.2H18.2" stroke="#3d8a98" stroke-width="0.6"/><rect x="5" y="9" width="2" height="3" fill="#fff" stroke="#3d8a98" stroke-width="0.4"/><rect x="13" y="9" width="2" height="3" fill="#fff" stroke="#3d8a98" stroke-width="0.4"/></svg>
<svg style="left:583.3px;top:273.1px;" width="20" height="20" viewBox="0 0 20 20"><rect x="4" y="0.8" width="11" height="18" rx="1.4" fill="#fff" stroke="#444" stroke-width="0.8"/><path d="M8.6 6.4C8.6 5 10.4 5 10.4 6.4V11L12.6 12C13.4 12.4 13.4 13 13.2 14L12.8 16H8L6.6 12.6C6.4 11.8 7.4 11.4 8 12.2L8.6 13Z" fill="#f7c9a4" stroke="#c79a78" stroke-width="0.4"/><rect x="7.6" y="16" width="5.8" height="2.6" fill="#2c3e50"/><circle cx="9.5" cy="5" r="0.9" fill="#f08a7a"/></svg>
<svg style="left:610.8px;top:273.1px;" width="20" height="20" viewBox="0 0 20 20"><path d="M3.4 0.8H12L16.6 5.4V19.2H3.4Z" fill="#fff" stroke="#666" stroke-width="0.8" stroke-linejoin="round"/><path d="M12 0.8V5.4H16.6" fill="none" stroke="#666" stroke-width="0.7"/><path d="M6 9.4H14M6 11.8H14M6 14.2H14" stroke="#f0897a" stroke-width="0.8"/></svg>
<svg style="left:638.4px;top:273.1px;" width="20" height="20" viewBox="0 0 20 20"><path d="M13 13C17 12 19.4 10.4 19 8.4L19.4 16L15.6 14.2Z" fill="#fff" stroke="#4aa0b8" stroke-width="0.6" stroke-linejoin="round"/><ellipse cx="9.4" cy="9.2" rx="8.6" ry="6.2" fill="#4fb6d0"/><path d="M4 13.6L3.4 17L7.6 15Z" fill="#4fb6d0"/><circle cx="5.8" cy="9.2" r="1" fill="#fff"/><circle cx="9.4" cy="9.2" r="1" fill="#fff"/><circle cx="13" cy="9.2" r="1" fill="#fff"/></svg>
<svg style="left:666.2px;top:273.1px;" width="20" height="20" viewBox="0 0 20 20"><rect x="4.4" y="0.8" width="11.2" height="18.4" rx="1.6" fill="#cdf1f1" stroke="#4aa8a8" stroke-width="0.9"/><path d="M4.4 3.4H15.6M4.4 16.4H15.6" stroke="#4aa8a8" stroke-width="0.6"/><rect x="4.9" y="16.6" width="10.2" height="2.2" fill="#5cc8c8"/></svg>
<svg style="left:583.3px;top:301px;" width="20" height="20" viewBox="0 0 20 20"><circle cx="4.2" cy="3.6" r="2.2" fill="#fbe39a" stroke="#b99b45" stroke-width="0.5"/><circle cx="15.8" cy="3.6" r="2.2" fill="#fbe39a" stroke="#b99b45" stroke-width="0.5"/><circle cx="10" cy="10.6" r="7.4" fill="#fff" stroke="#777" stroke-width="0.8"/><path d="M10 6V10.8H13" stroke="#e0564e" stroke-width="0.8" fill="none"/><path d="M5 17L3.6 19M15 17L16.4 19" stroke="#777" stroke-width="0.8"/></svg>
<svg style="left:610.8px;top:301px;" width="20" height="20" viewBox="0 0 20 20"><path d="M6.6 1L11.4 12M13.4 1L8.6 12" stroke="#b8b8c0" stroke-width="1.6"/><path d="M6.6 1L9 7M13.4 1L11 7" stroke="#f0a8a8" stroke-width="1.2"/><circle cx="5.4" cy="14.6" r="3.4" fill="none" stroke="#4aa8c0" stroke-width="1.7"/><circle cx="14.6" cy="14.6" r="3.4" fill="none" stroke="#4aa8c0" stroke-width="1.7"/></svg>
<svg style="left:638.4px;top:301px;" width="20" height="20" viewBox="0 0 20 20"><path d="M8 19V16H6C4.8 16 4.4 15.4 4.6 14.2L4.8 12.6L3 11.6L4.8 9C4.4 4.4 7.4 1.2 11.6 1.2C15.6 1.2 18.2 4 18.2 7.6C18.2 10.4 16.6 12.2 15.6 13.6V19" fill="#fff" stroke="#444" stroke-width="0.8" stroke-linejoin="round"/><path d="M9.4 8C9.6 5.6 12 4.8 13.4 6M14.4 9.4C14.2 11.8 11.8 12.4 10.4 11.4" stroke="#444" stroke-width="0.8" fill="none"/></svg>
<svg style="left:666.2px;top:301px;" width="20" height="20" viewBox="0 0 20 20"><path d="M2 4.4L6.6 1.4H13.4L18 4.4V19H2Z" fill="#fff" stroke="#444" stroke-width="0.8" stroke-linejoin="round"/><path d="M6.6 1.4L10 4.6L13.4 1.4M6.6 1.4L7.4 6L10 4.6L12.6 6L13.4 1.4" fill="#fff" stroke="#444" stroke-width="0.6" stroke-linejoin="round"/><path d="M10 5L9.2 15.4L10 16.8L10.8 15.4Z" fill="#222"/></svg>
<svg style="left:583.3px;top:328.3px;" width="20" height="20" viewBox="0 0 20 20"><rect x="2" y="3.2" width="16" height="11" rx="0.8" fill="#fff" stroke="#333" stroke-width="1"/><path d="M8.6 14.2L7.6 17.4H12.4L11.4 14.2Z" fill="#333"/><path d="M6 17.6H14" stroke="#333" stroke-width="0.9"/></svg>
<svg style="left:610.8px;top:328.3px;" width="20" height="20" viewBox="0 0 20 20"><rect x="2.4" y="4.6" width="15.2" height="10" rx="0.6" fill="#fff" stroke="#333" stroke-width="0.9"/><path d="M1 15.4H19" stroke="#333" stroke-width="1.1"/></svg>
<svg style="left:638.4px;top:328.3px;" width="20" height="20" viewBox="0 0 20 20"><path d="M16 1.6V16.4" stroke="#555" stroke-width="0.8"/><rect x="14.6" y="0.8" width="3.4" height="1.8" fill="#f08a9a"/><rect x="2.6" y="2.8" width="12" height="4.4" fill="#5bc8d4" stroke="#3d8a98" stroke-width="0.4"/><rect x="2.6" y="7.2" width="12" height="4" fill="#2c3e50"/><rect x="2.6" y="11.2" width="12" height="4.6" fill="#f7dc6f" stroke="#b99b45" stroke-width="0.4"/><path d="M1.6 16.4H15" stroke="#444" stroke-width="0.9"/><circle cx="15.4" cy="16.4" r="2.2" fill="#111"/><circle cx="15.4" cy="16.4" r="0.8" fill="#fff"/></svg>
<svg style="left:666.2px;top:328.3px;" width="20" height="20" viewBox="0 0 20 20"><rect x="3.4" y="1" width="13.2" height="18" rx="1.4" fill="#fff" stroke="#333" stroke-width="1.1"/><path d="M3.4 3.2H16.6M3.4 16.2H16.6" stroke="#333" stroke-width="0.8"/><rect x="3.6" y="16.2" width="12.8" height="2.6" fill="#333"/><path d="M6.4 6.4H7.6L8.6 11.6H13L13.8 7.6H8" stroke="#ea6a64" stroke-width="0.8" fill="none"/><circle cx="9.2" cy="13.2" r="0.7" fill="#ea6a64"/><circle cx="12.4" cy="13.2" r="0.7" fill="#ea6a64"/><circle cx="10" cy="17.8" r="0.6" fill="#fff"/></svg>
<svg style="left:583.3px;top:356.2px;" width="20" height="20" viewBox="0 0 20 20"><path d="M3.6 9.4V18.4H16.4V9.4" fill="#fff" stroke="#445" stroke-width="0.8"/><path d="M1.4 10.2L10 2L18.6 10.2Z" fill="#5bc8d4" stroke="#3d8a98" stroke-width="0.5" stroke-linejoin="round"/><rect x="8.6" y="11.4" width="2.8" height="2.8" fill="#222"/><rect x="6.8" y="14.6" width="2.8" height="2.8" fill="#222"/><rect x="10.4" y="14.6" width="2.8" height="2.8" fill="#222"/></svg>
<svg style="left:610.8px;top:356.2px;" width="20" height="20" viewBox="0 0 20 20"><path d="M3.6 9.4V18.4H16.4V9.4" fill="#fff" stroke="#445" stroke-width="0.8"/><path d="M1.4 10.2L10 2L18.6 10.2Z" fill="#5bc8d4" stroke="#3d8a98" stroke-width="0.5" stroke-linejoin="round"/><text x="10" y="17.4" font-size="6.6" text-anchor="middle" fill="#e8675f" font-family="Liberation Sans,sans-serif">¥</text></svg>
<svg style="left:638.4px;top:356.2px;" width="20" height="20" viewBox="0 0 20 20"><path d="M1.6 8L10 2L18.4 8Z" fill="#f4a0a8" stroke="#c87880" stroke-width="0.5" stroke-linejoin="round"/><path d="M2.4 9.2H17.6" stroke="#333" stroke-width="1"/><path d="M4.4 10V16.4M8.2 10V16.4M11.8 10V16.4M15.6 10V16.4" stroke="#333" stroke-width="1.3"/><path d="M1.6 17.4H18.4" stroke="#333" stroke-width="1.3"/></svg>
<svg style="left:666.2px;top:356.2px;" width="20" height="20" viewBox="0 0 20 20"><path d="M10.6 2.2C15 2.6 18 6.4 17.4 10.4M9.4 17.8C5 17.4 2 13.6 2.6 9.6" stroke="#555" stroke-width="0.6" fill="none"/><path d="M16.4 9.6L17.4 10.8L18.4 9.4M3.6 10.4L2.6 9.2L1.6 10.6" stroke="#555" stroke-width="0.6" fill="none"/><circle cx="6" cy="5.6" r="3.8" fill="#fbe08a" stroke="#c9a24e" stroke-width="0.6"/><circle cx="14" cy="14.4" r="3.8" fill="#fbe08a" stroke="#c9a24e" stroke-width="0.6"/><text x="6" y="7.6" font-size="5.4" font-weight="bold" text-anchor="middle" fill="#8a6a20" font-family="Liberation Sans,sans-serif">$</text><text x="14" y="16.4" font-size="5.4" font-weight="bold" text-anchor="middle" fill="#8a6a20" font-family="Liberation Sans,sans-serif">$</text></svg>
<svg style="left:583.3px;top:384px;" width="20" height="20" viewBox="0 0 20 20"><path d="M10 4.2C13.2 4.2 15.4 6.6 15.4 9.4C15.4 11.6 13.6 12.6 13.2 14.6H6.8C6.4 12.6 4.6 11.6 4.6 9.4C4.6 6.6 6.8 4.2 10 4.2Z" fill="#fbe08a" stroke="#e0c060" stroke-width="0.5"/><rect x="7.4" y="14.8" width="5.2" height="2.6" rx="0.8" fill="#f2cf6a"/><path d="M10 0.6V2.4M3.6 3.2L4.8 4.6M16.4 3.2L15.2 4.6M1 9H2.8M19 9H17.2" stroke="#333" stroke-width="0.9"/></svg>
<svg style="left:610.8px;top:384px;" width="20" height="20" viewBox="0 0 20 20"><rect x="1.2" y="2" width="17.6" height="15.6" rx="1" fill="#fff" stroke="#6a5a4a" stroke-width="0.8"/><rect x="1.2" y="2" width="17.6" height="3.6" fill="#f7d673" stroke="#6a5a4a" stroke-width="0.8"/><path d="M4 2L2.6 5.6M7.4 2L6 5.6M10.8 2L9.4 5.6M14.2 2L12.8 5.6M17.6 2L16.2 5.6" stroke="#6a5a4a" stroke-width="0.8"/><path d="M8.4 9L12.4 11.4L8.4 13.8Z" fill="#e8564e"/></svg>
<svg style="left:638.4px;top:384px;" width="20" height="20" viewBox="0 0 20 20"><path d="M1 4.4C3 3 5.6 3 7.2 4.4L10 5.4L12.8 4.4C14.4 3 17 3 19 4.4V17C17 15.6 14.4 15.6 12.8 17L10 18L7.2 17C5.6 15.6 3 15.6 1 17Z" fill="#fff" stroke="#556" stroke-width="0.8" stroke-linejoin="round"/><path d="M3 8C5 7 6 9.6 8 8.6M12 10C14 9 15 12 17 11M4 12.6C6 11.6 7.6 13.6 9 12.6" stroke="#8fd8e0" stroke-width="0.9" fill="none"/><path d="M12 2C13.6 2 14.6 3.2 14.6 4.4C14.6 6 12 8.6 12 8.6C12 8.6 9.4 6 9.4 4.4C9.4 3.2 10.4 2 12 2Z" fill="#fff" stroke="#e05a5a" stroke-width="0.7"/><circle cx="12" cy="4.4" r="0.8" fill="#e05a5a"/></svg>
<svg style="left:666.2px;top:384px;" width="20" height="20" viewBox="0 0 20 20"><ellipse cx="10.4" cy="12" rx="9.4" ry="4.2" fill="#fbe58f" stroke="#c9a24e" stroke-width="0.7"/><ellipse cx="10.4" cy="12.4" rx="3" ry="1.2" fill="#4a9ab0"/><path d="M10.4 2C12.4 2 13.8 3.4 13.8 5.2C13.8 7.4 10.4 11.4 10.4 11.4C10.4 11.4 7 7.4 7 5.2C7 3.4 8.4 2 10.4 2Z" fill="#e8544e" stroke="#b03a3a" stroke-width="0.5"/><circle cx="10.4" cy="5.2" r="1.2" fill="#fff"/></svg>
<svg style="left:583.3px;top:412px;" width="20" height="20" viewBox="0 0 20 20"><g transform="translate(1.2,0.6) scale(0.88)"><path d="M12.6 1.6H17.6C18.2 1.6 18.4 1.8 18.4 2.4V7.4L8.4 18.4L1.6 11.6Z" fill="#f3a3a3" stroke="#8a5a5a" stroke-width="0.7" stroke-linejoin="round"/><circle cx="15.2" cy="4.8" r="1.1" fill="#fff" stroke="#8a5a5a" stroke-width="0.5"/><path d="M8.4 9.6L11 12.2" stroke="#fbd0d0" stroke-width="0.8"/></g></svg>
<svg style="left:610.8px;top:412px;" width="20" height="20" viewBox="0 0 20 20"><path d="M6.4 7C6.4 1.2 13.6 1.2 13.6 7" fill="none" stroke="#555" stroke-width="0.8"/><path d="M4.4 5.6H15.6L17.6 19H2.4Z" fill="#5bc8d4" stroke="#3d8a98" stroke-width="0.8" stroke-linejoin="round"/><path d="M4.4 5.6C7 8 13 8 15.6 5.6" fill="none" stroke="#3d8a98" stroke-width="0.5"/></svg>
<svg style="left:638.4px;top:412px;" width="20" height="20" viewBox="0 0 20 20"><path d="M0.8 6.4L4.4 4.4L8 9.4L4.4 13.4Z" fill="#5cc0c8" stroke="#3d8a98" stroke-width="0.4"/><path d="M19.2 6.4L15.6 4.4L12 9.4L15.6 13.4Z" fill="#5cc0c8" stroke="#3d8a98" stroke-width="0.4"/><path d="M4.6 6L9.6 5.2L15.4 6L16.4 11.6L10.4 16.4C9.4 17 8.4 16.6 4.2 12.4Z" fill="#fbd9b5" stroke="#c79a78" stroke-width="0.5" stroke-linejoin="round"/><path d="M9.6 5.2L7 8.4C7.6 9.6 9.4 9.4 10.4 8L14 11" fill="none" stroke="#c79a78" stroke-width="0.5"/></svg>
<svg style="left:666.2px;top:412px;" width="20" height="20" viewBox="0 0 20 20"><circle cx="9" cy="11" r="7.6" fill="#4ab0c8" stroke="#2f7a90" stroke-width="0.6"/><circle cx="9" cy="11" r="5" fill="#fff"/><circle cx="9" cy="11" r="2.6" fill="#e8645e"/><path d="M9 11L16 4" stroke="#555" stroke-width="0.8"/><path d="M15 2.6L17.6 2.4L17.4 5L15.4 5.4Z" fill="#f0a050" stroke="#a86a30" stroke-width="0.4"/></svg>
<div style="left:0px;top:430px;width:552.5px;height:7.5px;background:#e6e6e6;border-top:1px solid #d8d8d8;border-bottom:1px solid #d8d8d8;"></div>
<div style="left:1px;top:430px;width:8px;height:7.5px;background:#fff;border:1px solid #d0d0d0;"></div>
<svg style="left:3px;top:431.5px;" width="3.5" height="5" viewBox="0 0 3.5 5"><path d="M2.6 0.6L0.8 2.5L2.6 4.4Z" fill="#333"/></svg>
<div style="left:152px;top:430px;width:240px;height:7.5px;background:#fff;border:1px solid #cfcfcf;"></div>
<div style="left:544.5px;top:430px;width:8px;height:7.5px;background:#fff;border:1px solid #d0d0d0;"></div>
<svg style="left:547px;top:431.5px;" width="3.5" height="5" viewBox="0 0 3.5 5"><path d="M0.9 0.6L2.7 2.5L0.9 4.4Z" fill="#333"/></svg>
<div class="t" style="left:1.6px;top:442.0px;font-size:5.3px;color:#333;transform:translate(0,-50%);">填充</div>
<svg style="left:0px;top:438.7px;" width="552" height="5.8" viewBox="0 0 552 5.8"><rect x="14.00" y="0" width="4.74" height="5.8" fill="#c8102e"/><rect x="19.64" y="0" width="4.74" height="5.8" fill="#d0203a"/><rect x="25.29" y="0" width="4.74" height="5.8" fill="#d8506a"/><rect x="30.93" y="0" width="4.74" height="5.8" fill="#e0606a"/><rect x="36.58" y="0" width="4.74" height="5.8" fill="#e87078"/><rect x="42.22" y="0" width="4.74" height="5.8" fill="#e8788a"/><rect x="47.87" y="0" width="4.74" height="5.8" fill="#f090a0"/><rect x="53.52" y="0" width="4.74" height="5.8" fill="#f4a0a8"/><rect x="59.16" y="0" width="4.74" height="5.8" fill="#f8a8a0"/><rect x="64.80" y="0" width="4.74" height="5.8" fill="#f9b098"/><rect x="70.45" y="0" width="4.74" height="5.8" fill="#fbbcb0"/><rect x="76.09" y="0" width="4.74" height="5.8" fill="#fcd0d0"/><rect x="81.74" y="0" width="4.74" height="5.8" fill="#fde0e4"/><rect x="87.38" y="0" width="4.74" height="5.8" fill="#fef0f2"/><rect x="93.03" y="0" width="4.74" height="5.8" fill="#fff6f8"/><rect x="98.67" y="0" width="4.74" height="5.8" fill="#0e2a5a"/><rect x="104.32" y="0" width="4.74" height="5.8" fill="#1a3a7a"/><rect x="109.96" y="0" width="4.74" height="5.8" fill="#3a3a8a"/><rect x="115.61" y="0" width="4.74" height="5.8" fill="#1a5aa0"/><rect x="121.25" y="0" width="4.74" height="5.8" fill="#2a6ab0"/><rect x="126.90" y="0" width="4.74" height="5.8" fill="#4a7ac8"/><rect x="132.54" y="0" width="4.74" height="5.8" fill="#5a8ad8"/><rect x="138.19" y="0" width="4.74" height="5.8" fill="#3a90d8"/><rect x="143.83" y="0" width="4.74" height="5.8" fill="#2a98e0"/><rect x="149.48" y="0" width="4.74" height="5.8" fill="#30a8e8"/><rect x="155.12" y="0" width="4.74" height="5.8" fill="#48b8f0"/><rect x="160.77" y="0" width="4.74" height="5.8" fill="#70c8f0"/><rect x="166.41" y="0" width="4.74" height="5.8" fill="#98d8f8"/><rect x="172.06" y="0" width="4.74" height="5.8" fill="#c0e8f8"/><rect x="177.70" y="0" width="4.74" height="5.8" fill="#e4f5fd"/><rect x="183.35" y="0" width="4.74" height="5.8" fill="#0a4a3a"/><rect x="188.99" y="0" width="4.74" height="5.8" fill="#0e5a40"/><rect x="194.64" y="0" width="4.74" height="5.8" fill="#0a6a5a"/><rect x="200.28" y="0" width="4.74" height="5.8" fill="#6a7a30"/><rect x="205.93" y="0" width="4.74" height="5.8" fill="#1a8a50"/><rect x="211.57" y="0" width="4.74" height="5.8" fill="#2a9a58"/><rect x="217.22" y="0" width="4.74" height="5.8" fill="#20a890"/><rect x="222.86" y="0" width="4.74" height="5.8" fill="#40b8b0"/><rect x="228.51" y="0" width="4.74" height="5.8" fill="#30b8a0"/><rect x="234.15" y="0" width="4.74" height="5.8" fill="#38b878"/><rect x="239.80" y="0" width="4.74" height="5.8" fill="#28a860"/><rect x="245.44" y="0" width="4.74" height="5.8" fill="#70b830"/><rect x="251.09" y="0" width="4.74" height="5.8" fill="#a8c848"/><rect x="256.74" y="0" width="4.74" height="5.8" fill="#c8d030"/><rect x="262.38" y="0" width="4.74" height="5.8" fill="#e8ecc0"/><rect x="268.02" y="0" width="4.74" height="5.8" fill="#e84a10"/><rect x="273.67" y="0" width="4.74" height="5.8" fill="#e85a18"/><rect x="279.31" y="0" width="4.74" height="5.8" fill="#f07020"/><rect x="284.96" y="0" width="4.74" height="5.8" fill="#f08828"/><rect x="290.60" y="0" width="4.74" height="5.8" fill="#f09a30"/><rect x="296.25" y="0" width="4.74" height="5.8" fill="#f8a828"/><rect x="301.89" y="0" width="4.74" height="5.8" fill="#f8b830"/><rect x="307.54" y="0" width="4.74" height="5.8" fill="#f8c830"/><rect x="313.19" y="0" width="4.74" height="5.8" fill="#f8d030"/><rect x="318.83" y="0" width="4.74" height="5.8" fill="#fce040"/><rect x="324.47" y="0" width="4.74" height="5.8" fill="#fce878"/><rect x="330.12" y="0" width="4.74" height="5.8" fill="#f8d8a0"/><rect x="335.76" y="0" width="4.74" height="5.8" fill="#fce0b0"/><rect x="341.41" y="0" width="4.74" height="5.8" fill="#fde8c8"/><rect x="347.05" y="0" width="4.74" height="5.8" fill="#fef4e4"/><rect x="352.70" y="0" width="4.74" height="5.8" fill="#8a2a9a"/><rect x="358.34" y="0" width="4.74" height="5.8" fill="#8a3aa8"/><rect x="363.99" y="0" width="4.74" height="5.8" fill="#8a48b0"/><rect x="369.63" y="0" width="4.74" height="5.8" fill="#9058b8"/><rect x="375.28" y="0" width="4.74" height="5.8" fill="#a068b8"/><rect x="380.92" y="0" width="4.74" height="5.8" fill="#b070b8"/><rect x="386.57" y="0" width="4.74" height="5.8" fill="#c890c8"/><rect x="392.21" y="0" width="4.74" height="5.8" fill="#c0a0d8"/><rect x="397.86" y="0" width="4.74" height="5.8" fill="#d0b8e8"/><rect x="403.50" y="0" width="4.74" height="5.8" fill="#ecd8f0"/><rect x="409.15" y="0" width="4.74" height="5.8" fill="#7a2a1a"/><rect x="414.79" y="0" width="4.74" height="5.8" fill="#8a3a1a"/><rect x="420.44" y="0" width="4.74" height="5.8" fill="#a04a20"/><rect x="426.08" y="0" width="4.74" height="5.8" fill="#b85a28"/><rect x="431.73" y="0" width="4.74" height="5.8" fill="#c87830"/><rect x="437.37" y="0" width="4.74" height="5.8" fill="#d09060"/><rect x="443.02" y="0" width="4.74" height="5.8" fill="#e8b880"/><rect x="448.66" y="0" width="4.74" height="5.8" fill="#d8d8d8"/><rect x="454.31" y="0" width="4.74" height="5.8" fill="#e4e4e4"/><rect x="459.95" y="0" width="4.74" height="5.8" fill="#000000"/><rect x="465.60" y="0" width="4.74" height="5.8" fill="#333333"/><rect x="471.24" y="0" width="4.74" height="5.8" fill="#4a4a4a"/><rect x="476.89" y="0" width="4.74" height="5.8" fill="#666666"/><rect x="482.53" y="0" width="4.74" height="5.8" fill="#808080"/><rect x="488.18" y="0" width="4.74" height="5.8" fill="#999999"/><rect x="493.82" y="0" width="4.74" height="5.8" fill="#b0b0b0"/><rect x="499.47" y="0" width="4.74" height="5.8" fill="#c8c8c8"/><rect x="505.11" y="0" width="4.74" height="5.8" fill="#dddddd"/><rect x="510.76" y="0" width="4.74" height="5.8" fill="#eeeeee"/></svg>
<div class="t" style="left:523px;top:442.2px;font-size:5.3px;color:#333;transform:translate(0,-50%);">最近</div>
<svg style="left:538.8px;top:438.3px;" width="6.5" height="6.5" viewBox="0 0 6.5 6.5"><circle cx="3.2" cy="3.2" r="2.6" stroke="#555" fill="none" stroke-width="0.8"/><circle cx="3.2" cy="3.2" r="0.9" fill="#555"/></svg>
<div style="left:0px;top:445.5px;width:700px;height:14.5px;background:#fdfdfd;border-top:1px solid #dedede;border-bottom:2px solid #cfcfcf;"></div>
<div class="t" style="left:3px;top:450.5px;font-size:6.3px;color:#1a3fd0;text-decoration:underline;transform:translate(0,-50%);">https://www.edrawsoft.cn/mindmaster/</div>
<svg style="left:551px;top:448px;" width="7" height="8" viewBox="0 0 7 8"><rect x="0.6" y="0.6" width="5.8" height="6.8" stroke="#444" fill="none" stroke-width="0.8"/><path d="M2 0.6V7.4M5 0.6V7.4" stroke="#444" fill="none" stroke-width="0.5"/></svg>
<svg style="left:564.4px;top:448.2px;" width="7.5" height="7.5" viewBox="0 0 7.5 7.5"><rect x="0.6" y="0.6" width="6.3" height="6.3" stroke="#444" fill="none" stroke-width="0.8"/><path d="M2 3V2H3M4.5 2H5.5V3M5.5 4.5V5.5H4.5M3 5.5H2V4.5" stroke="#444" fill="none" stroke-width="0.7"/></svg>
<div style="left:578.6px;top:451.6px;width:4px;height:0.8px;background:#555;"></div>
<div style="left:587px;top:451.6px;width:41px;height:0.8px;background:#b8b8b8;"></div>
<div style="left:595.2px;top:448.5px;width:2.6px;height:7px;background:#fff;border:1px solid #666;"></div>
<div style="left:631.5px;top:451.6px;width:4.4px;height:0.8px;background:#555;"></div>
<div style="left:633.3px;top:449.8px;width:0.8px;height:4.4px;background:#555;"></div>
<div class="t" style="left:645.8px;top:452.7px;font-size:5.6px;color:#333;transform:translate(-50%,-50%);">85%</div>
<div class="t" style="left:655.5px;top:452.9px;font-size:3.4px;color:#333;transform:translate(-50%,-50%);">▾</div>
<svg style="left:663.2px;top:448.2px;" width="7.5" height="7.5" viewBox="0 0 7.5 7.5"><path d="M0.6 2.4V0.6H2.4M5.1 0.6H6.9V2.4M6.9 5.1V6.9H5.1M2.4 6.9H0.6V5.1" stroke="#444" fill="none" stroke-width="0.8"/><rect x="2.4" y="2.4" width="2.7" height="2.7" stroke="#444" fill="none" stroke-width="0.7"/></svg>
<svg style="left:677px;top:448.2px;" width="7" height="7.5" viewBox="0 0 7 7.5"><rect x="0.6" y="0.6" width="5.8" height="6.3" rx="0.8" stroke="#444" fill="none" stroke-width="0.8"/><path d="M0.6 3.4H6.4" stroke="#444" fill="none" stroke-width="0.8"/></svg>
</div></body></html>
